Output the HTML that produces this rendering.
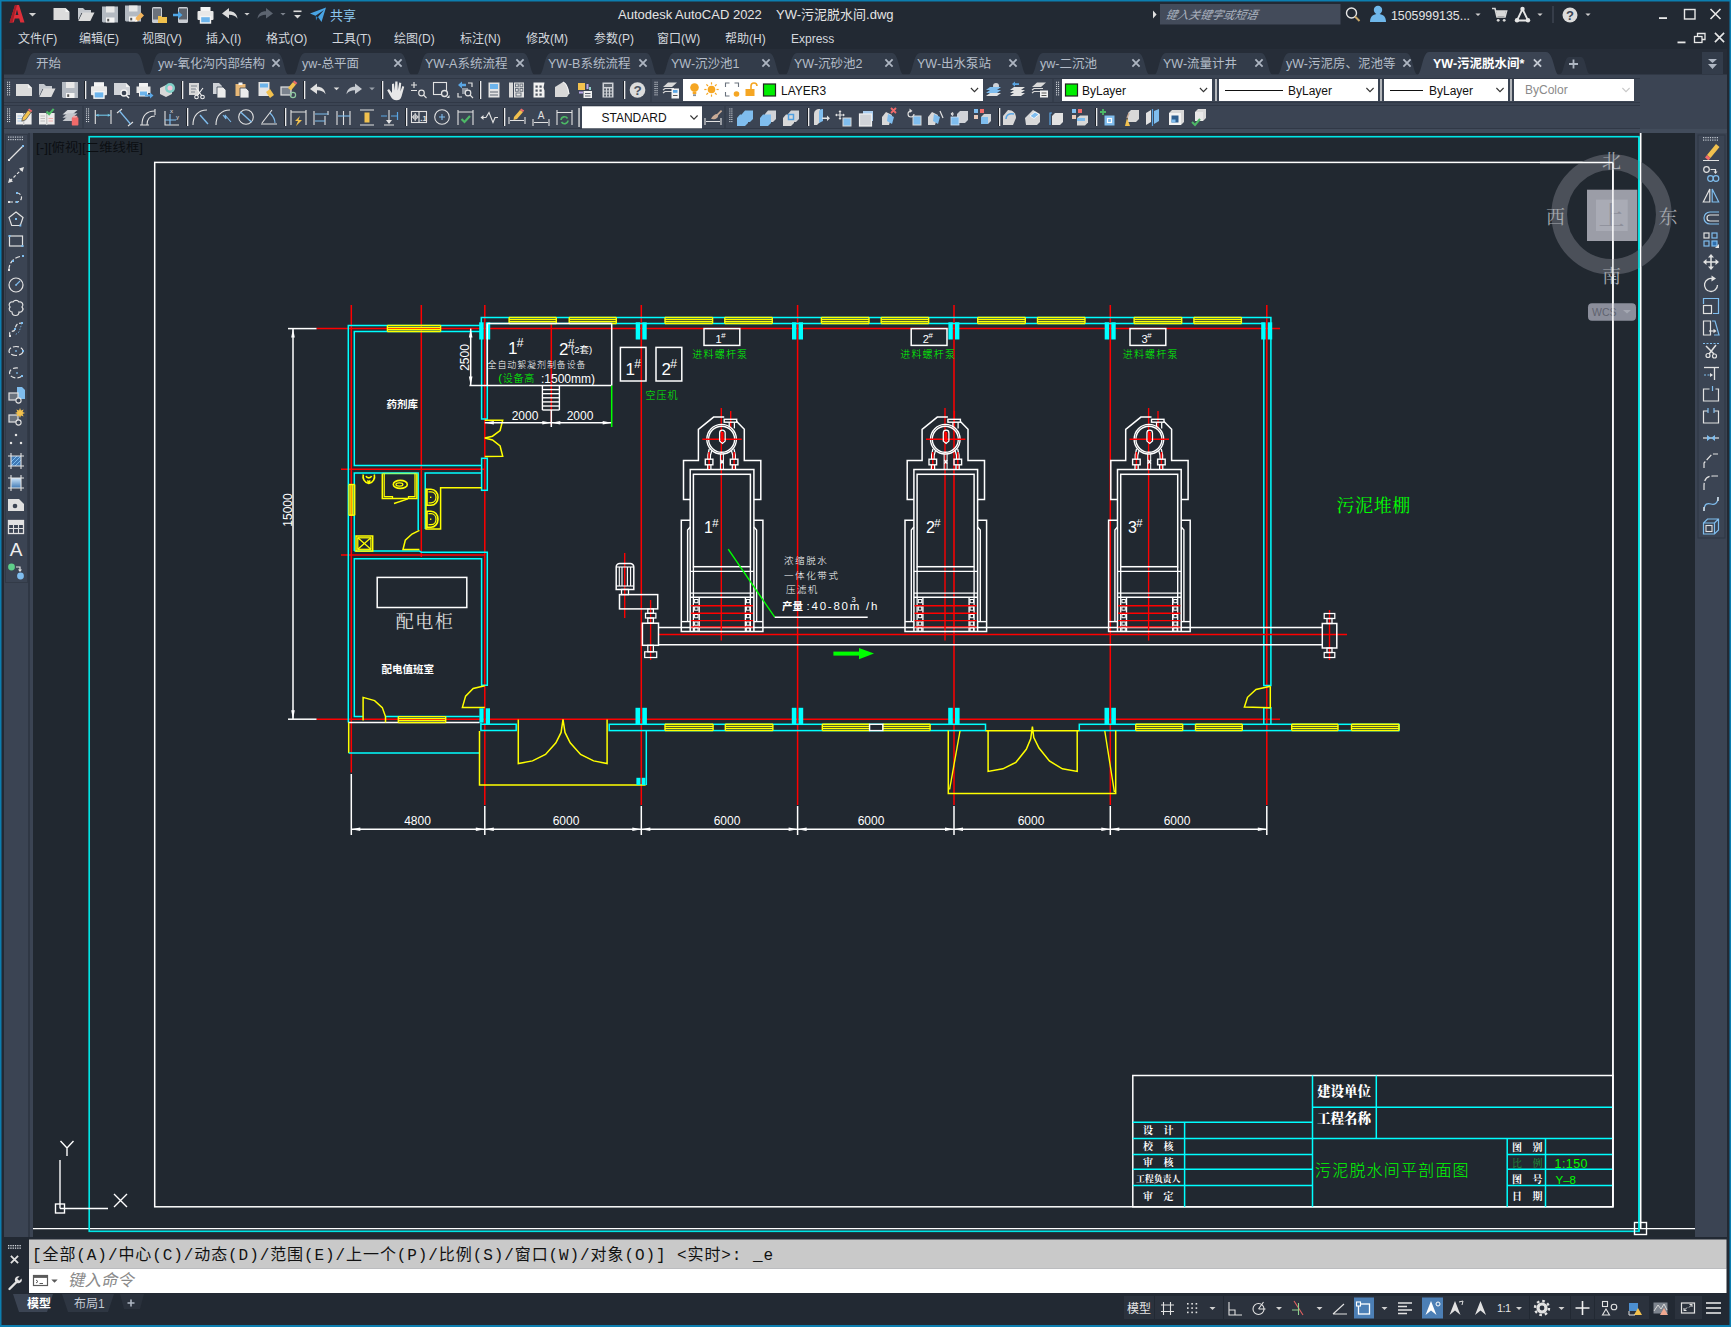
<!DOCTYPE html>
<html lang="zh"><head><meta charset="utf-8"><title>Autodesk AutoCAD 2022 - YW-污泥脱水间.dwg</title>
<style>
html,body{margin:0;padding:0;background:#222933;overflow:hidden}
svg{display:block;font-family:"Liberation Sans","Noto Sans CJK SC",sans-serif}
text{white-space:pre}
</style></head><body>
<svg width="1731" height="1327" viewBox="0 0 1731 1327">
<g id="chrome">
<rect x="0" y="0" width="1731" height="1327" fill="#0c7eb0"/>
<rect x="1.5" y="1.5" width="1728" height="1323.5" fill="#222933"/>
<rect x="4" y="49" width="1723" height="26" fill="#262d38"/>
<rect x="4" y="74.5" width="1723" height="58.5" fill="#3b4453"/>
<line x1="4" y1="102.5" x2="1640" y2="102.5" stroke="#303846" stroke-width="1" />
<line x1="4" y1="105.5" x2="1640" y2="105.5" stroke="#303846" stroke-width="1" />
<line x1="4" y1="128.5" x2="1640" y2="128.5" stroke="#303846" stroke-width="1" />
<line x1="4" y1="78.5" x2="1640" y2="78.5" stroke="#303846" stroke-width="1" />
<rect x="4" y="129" width="1723" height="4" fill="#424c5b"/>
<rect x="4" y="133" width="29" height="1104" fill="#3b4453"/>
<rect x="28" y="133" width="2" height="1104" fill="#2f3744"/>
<rect x="1695" y="133" width="32" height="1104" fill="#3b4453"/>
<rect x="33" y="133" width="1662" height="1104" fill="#212830"/>
<rect x="1698" y="135" width="27" height="403" fill="#3b4453" stroke="#2f3744" stroke-width="1"/>
<rect x="4" y="1237" width="1723" height="88" fill="#222933"/>
<rect x="29" y="1239.5" width="1697.5" height="29" fill="#c9c9c9"/>
<rect x="29" y="1268.5" width="1697.5" height="24.5" fill="#ffffff"/>
</g>
<g id="titlebar">
<path d="M9.5,22.5 L15,5 h4 L24.5,22.5 h-4.2 l-1.1,-4 h-4.4 l-1.1,4z M15.6,15 h2.8 l-1.4,-5.4z" fill="#dd2f3a" fill-rule="evenodd"/>
<path d="M9.5,22.5 L15,5 h2 L12.5,22.5z" fill="#a81d27"/>
<path d="M28.9,13.0 h7.2 l-3.6,3.6z" fill="#d0d0d0"/>
<path d="M53.5,8 h12 l4,4 v8 h-16z" fill="#dcdcdc"/>
<path d="M65.5,8 v4 h4z" fill="#f4f4f4"/>
<path d="M78,20.5 v-12.5 h5 l2,2 h6 v3 h-9.5 z" fill="#c4c8ce"/>
<path d="M78.3,21.0 l4.2,-8.5 h12 l-4.2,8.5z" fill="#dcdcdc"/>
<path d="M102,6.5 h16 v16 h-15 l-1,-1z" fill="#b4bac2"/>
<rect x="106" y="6.5" width="8.5" height="6" fill="#e8e8e8"/>
<rect x="106" y="17.5" width="8.5" height="5" fill="#f4f4f4"/>
<rect x="107.2" y="18.8" width="2" height="2.6" fill="#555"/>
<path d="M125,5.5 h16 v16 h-15 l-1,-1z" fill="#b4bac2"/>
<rect x="129" y="5.5" width="8.5" height="6" fill="#e8e8e8"/>
<rect x="129" y="16.5" width="8.5" height="5" fill="#f4f4f4"/>
<rect x="130.2" y="17.8" width="2" height="2.6" fill="#555"/>
<path d="M135,21.5 l1,-4 l5,-5 l3,3 l-5,5z" fill="#f2b45c"/>
<path d="M135,21.5 l0.7,-2.6 l2,2z" fill="#fff"/>
<rect x="152" y="7" width="10" height="16" fill="#c8ccd2" rx="1.5"/>
<rect x="153" y="8.5" width="8" height="11" fill="#6b727c"/>
<path d="M158,23 v-7 h3 l1,1 h5 v6z" fill="#f0c04c"/>
<rect x="178" y="7" width="10" height="16" fill="#c8ccd2" rx="1.5"/>
<rect x="179" y="8.5" width="8" height="11" fill="#5c636d"/>
<path d="M173,13.8 h5 v-2.6 l4.5,3.8 l-4.5,3.8 v-2.6 h-5z" fill="#4fa6e6"/>
<rect x="200.5" y="7" width="10" height="5" fill="#f4f4f4"/>
<rect x="197.5" y="11" width="16" height="9" fill="#e8e8e8" rx="1"/>
<rect x="200.5" y="16.5" width="10" height="6.5" fill="#6cb4ec" stroke="#f4f4f4" stroke-width="1.4"/>
<path d="M222,13.5 l7,-5.5 v3.3 c5,0 8,2.5 8.5,7.5 c-2,-3 -4.5,-4 -8.5,-4 v3.7z" fill="#dcdcdc"/>
<path d="M244.4,13.0 h5.2 l-2.6,2.6z" fill="#d0d0d0"/>
<path d="M273,13.5 l-7,-5.5 v3.3 c-5,0 -8,2.5 -8.5,7.5 c2,-3 4.5,-4 8.5,-4 v3.7z" fill="#5c6470"/>
<path d="M280.4,13.0 h5.2 l-2.6,2.6z" fill="#7c838d"/>
<rect x="293.5" y="10.5" width="8" height="1.6" fill="#d8d8d8"/>
<path d="M294.1,15.0 h6.8 l-3.4,3.4z" fill="#d8d8d8"/>
<path d="M310,13.5 L326,7.5 L321.5,22 L318,17 L324,10 L315.5,15.8z" fill="#49a5e6"/>
<path d="M315.8,16.3 l1.8,0.9 l-1.6,3.2z" fill="#2f86c6"/>
<text x="330" y="19.5" font-size="13" fill="#8cc8f0">共享</text>
<text x="618" y="18.5" font-size="13" fill="#e4e4e4">Autodesk AutoCAD 2022    YW-污泥脱水间.dwg</text>
<path d="M1153,10.5 l3.6,4 l-3.6,4z" fill="#e0e0e0"/>
<rect x="1160" y="4" width="180.5" height="20.5" fill="#434b5a"/>
<text x="1165" y="19" font-size="11.5" fill="#a9b1be" font-style="italic" transform="translate(1165 19) skewX(-12) translate(-1165 -19)">键入关键字或短语</text>
<circle cx="1351.5" cy="13" r="5" fill="none" stroke="#e6e6e6" stroke-width="1.4" />
<line x1="1355" y1="16.5" x2="1359.5" y2="21" stroke="#c9a86a" stroke-width="2" />
<circle cx="1378" cy="10" r="4.2" fill="#6fb7ea" stroke="none" stroke-width="0" />
<path d="M1370,22 c0,-6 3.5,-8 8,-8 s8,2 8,8z" fill="#6fb7ea"/>
<text x="1391" y="19.5" font-size="13" fill="#e4e4e4" textLength="79" lengthAdjust="spacingAndGlyphs">1505999135...</text>
<path d="M1475.4,13.5 h5.2 l-2.6,2.6z" fill="#d0d0d0"/>
<path d="M1492,8.5 h3 l2,8.5 h8 l1.6,-6 h-10.6" fill="none" stroke="#d8d8d8" stroke-width="1.6"/>
<rect x="1496.5" y="11" width="9" height="5" fill="#d8d8d8"/>
<circle cx="1498.2" cy="20.3" r="1.4" fill="#d8d8d8" stroke="none" stroke-width="0" />
<circle cx="1504.2" cy="20.3" r="1.4" fill="#d8d8d8" stroke="none" stroke-width="0" />
<path d="M1522.5,9 L1517,20.5 h11z" fill="none" stroke="#e6e6e6" stroke-width="1.8" stroke-linejoin="round"/>
<circle cx="1522.5" cy="9" r="2.2" fill="#e6e6e6" stroke="none" stroke-width="0" />
<circle cx="1517" cy="20.3" r="2.2" fill="#e6e6e6" stroke="none" stroke-width="0" />
<circle cx="1528" cy="20.3" r="2.2" fill="#e6e6e6" stroke="none" stroke-width="0" />
<path d="M1537.4,13.5 h5.2 l-2.6,2.6z" fill="#d0d0d0"/>
<rect x="1552.5" y="6" width="1" height="17" fill="#4a5261"/>
<circle cx="1570" cy="15" r="7.5" fill="#dcdcdc" stroke="none" stroke-width="0" />
<text x="1570" y="19.6" font-size="13" fill="#3b4453" text-anchor="middle" font-weight="bold">?</text>
<path d="M1585.4,13.5 h5.2 l-2.6,2.6z" fill="#d0d0d0"/>
<rect x="1659" y="17.2" width="8" height="1.8" fill="#e8e8e8"/>
<rect x="1684.5" y="9.5" width="10.5" height="9.5" fill="none" stroke="#e8e8e8" stroke-width="1.4"/>
<path d="M1710.5,9 L1720.5,19 M1720.5,9 L1710.5,19" stroke="#e8e8e8" stroke-width="1.6" fill="none"/>
<rect x="1677.5" y="41.5" width="8" height="1.8" fill="#e8e8e8"/>
<rect x="1694.5" y="36.5" width="7.5" height="6" fill="none" stroke="#e8e8e8" stroke-width="1.3"/>
<path d="M1697.5,36.5 v-3 h7.5 v6 h-3" fill="none" stroke="#e8e8e8" stroke-width="1.3"/>
<path d="M1714.9,32.9 L1724.1,42.1 M1724.1,32.9 L1714.9,42.1" stroke="#e8e8e8" stroke-width="1.6" fill="none"/>
<text x="18" y="42.8" font-size="12" fill="#d4d8de">文件(F)</text>
<text x="79" y="42.8" font-size="12" fill="#d4d8de">编辑(E)</text>
<text x="142" y="42.8" font-size="12" fill="#d4d8de">视图(V)</text>
<text x="206" y="42.8" font-size="12" fill="#d4d8de">插入(I)</text>
<text x="266" y="42.8" font-size="12" fill="#d4d8de">格式(O)</text>
<text x="332" y="42.8" font-size="12" fill="#d4d8de">工具(T)</text>
<text x="394" y="42.8" font-size="12" fill="#d4d8de">绘图(D)</text>
<text x="460" y="42.8" font-size="12" fill="#d4d8de">标注(N)</text>
<text x="526" y="42.8" font-size="12" fill="#d4d8de">修改(M)</text>
<text x="594" y="42.8" font-size="12" fill="#d4d8de">参数(P)</text>
<text x="657" y="42.8" font-size="12" fill="#d4d8de">窗口(W)</text>
<text x="725" y="42.8" font-size="12" fill="#d4d8de">帮助(H)</text>
<text x="791" y="42.8" font-size="12" fill="#d4d8de">Express</text>
<path d="M22,75 c5,0 5,-22 12,-22 H136 c7,0 7,22 12,22z" fill="#333c4a"/>
<text x="36" y="68" font-size="12.5" fill="#b4bcc8">开始</text>
<path d="M148,75 c5,0 5,-22 12,-22 H277 c7,0 7,22 12,22z" fill="#333c4a"/>
<text x="158" y="68" font-size="12.5" fill="#b4bcc8">yw-氧化沟内部结构</text>
<path d="M272.4,59.4 L279.6,66.6 M279.6,59.4 L272.4,66.6" stroke="#aeb6c2" stroke-width="1.8" fill="none"/>
<path d="M293,75 c5,0 5,-22 12,-22 H400 c7,0 7,22 12,22z" fill="#333c4a"/>
<text x="302" y="68" font-size="12.5" fill="#b4bcc8">yw-总平面</text>
<path d="M394.4,59.4 L401.6,66.6 M401.6,59.4 L394.4,66.6" stroke="#aeb6c2" stroke-width="1.8" fill="none"/>
<path d="M416,75 c5,0 5,-22 12,-22 H523 c7,0 7,22 12,22z" fill="#333c4a"/>
<text x="425" y="68" font-size="12.5" fill="#b4bcc8">YW-A系统流程</text>
<path d="M516.4,59.4 L523.6,66.6 M523.6,59.4 L516.4,66.6" stroke="#aeb6c2" stroke-width="1.8" fill="none"/>
<path d="M539,75 c5,0 5,-22 12,-22 H646 c7,0 7,22 12,22z" fill="#333c4a"/>
<text x="548" y="68" font-size="12.5" fill="#b4bcc8">YW-B系统流程</text>
<path d="M639.4,59.4 L646.6,66.6 M646.6,59.4 L639.4,66.6" stroke="#aeb6c2" stroke-width="1.8" fill="none"/>
<path d="M662,75 c5,0 5,-22 12,-22 H769 c7,0 7,22 12,22z" fill="#333c4a"/>
<text x="671" y="68" font-size="12.5" fill="#b4bcc8">YW-沉沙池1</text>
<path d="M762.4,59.4 L769.6,66.6 M769.6,59.4 L762.4,66.6" stroke="#aeb6c2" stroke-width="1.8" fill="none"/>
<path d="M785,75 c5,0 5,-22 12,-22 H892 c7,0 7,22 12,22z" fill="#333c4a"/>
<text x="794" y="68" font-size="12.5" fill="#b4bcc8">YW-沉砂池2</text>
<path d="M885.4,59.4 L892.6,66.6 M892.6,59.4 L885.4,66.6" stroke="#aeb6c2" stroke-width="1.8" fill="none"/>
<path d="M908,75 c5,0 5,-22 12,-22 H1015 c7,0 7,22 12,22z" fill="#333c4a"/>
<text x="917" y="68" font-size="12.5" fill="#b4bcc8">YW-出水泵站</text>
<path d="M1009.4,59.4 L1016.6,66.6 M1016.6,59.4 L1009.4,66.6" stroke="#aeb6c2" stroke-width="1.8" fill="none"/>
<path d="M1031,75 c5,0 5,-22 12,-22 H1138 c7,0 7,22 12,22z" fill="#333c4a"/>
<text x="1040" y="68" font-size="12.5" fill="#b4bcc8">yw-二沉池</text>
<path d="M1132.4,59.4 L1139.6,66.6 M1139.6,59.4 L1132.4,66.6" stroke="#aeb6c2" stroke-width="1.8" fill="none"/>
<path d="M1154,75 c5,0 5,-22 12,-22 H1261 c7,0 7,22 12,22z" fill="#333c4a"/>
<text x="1163" y="68" font-size="12.5" fill="#b4bcc8">YW-流量计井</text>
<path d="M1255.4,59.4 L1262.6,66.6 M1262.6,59.4 L1255.4,66.6" stroke="#aeb6c2" stroke-width="1.8" fill="none"/>
<path d="M1277,75 c5,0 5,-22 12,-22 H1406 c7,0 7,22 12,22z" fill="#333c4a"/>
<text x="1286" y="68" font-size="12.5" fill="#b4bcc8">yW-污泥房、泥池等</text>
<path d="M1403.4,59.4 L1410.6,66.6 M1410.6,59.4 L1403.4,66.6" stroke="#aeb6c2" stroke-width="1.8" fill="none"/>
<path d="M1416,76 c6,0 6,-24 13,-24 H1546 c8,0 8,24 14,24z" fill="#3b4453"/>
<text x="1433" y="68" font-size="12.5" fill="#ffffff" font-weight="bold">YW-污泥脱水间*</text>
<path d="M1533.9,59.4 L1541.1,66.6 M1541.1,59.4 L1533.9,66.6" stroke="#c4cad4" stroke-width="1.8" fill="none"/>
<path d="M1560,74 c4,0 4,-17 9,-17 h12 c5,0 5,17 9,17z" fill="#2f3744"/>
<path d="M1569,64 h9 M1573.5,59.5 v9" stroke="#aeb6c2" stroke-width="1.8"/>
<rect x="1702" y="52" width="21" height="22" fill="#333c4a"/>
<path d="M1708,59 h9 l-4.5,4z M1708,64 h9 l-4.5,5z" fill="#aeb6c2"/>
</g>
<g id="toolbars">
<rect x="7" y="81.7" width="1.1" height="1.1" fill="#d0d4da"/>
<rect x="9" y="81.7" width="1.1" height="1.1" fill="#d0d4da"/>
<rect x="7" y="83.8" width="1.1" height="1.1" fill="#d0d4da"/>
<rect x="9" y="83.8" width="1.1" height="1.1" fill="#d0d4da"/>
<rect x="7" y="85.9" width="1.1" height="1.1" fill="#d0d4da"/>
<rect x="9" y="85.9" width="1.1" height="1.1" fill="#d0d4da"/>
<rect x="7" y="88.0" width="1.1" height="1.1" fill="#d0d4da"/>
<rect x="9" y="88.0" width="1.1" height="1.1" fill="#d0d4da"/>
<rect x="7" y="90.1" width="1.1" height="1.1" fill="#d0d4da"/>
<rect x="9" y="90.1" width="1.1" height="1.1" fill="#d0d4da"/>
<rect x="7" y="92.2" width="1.1" height="1.1" fill="#d0d4da"/>
<rect x="9" y="92.2" width="1.1" height="1.1" fill="#d0d4da"/>
<rect x="7" y="94.3" width="1.1" height="1.1" fill="#d0d4da"/>
<rect x="9" y="94.3" width="1.1" height="1.1" fill="#d0d4da"/>
<path d="M16,84 h12 l4,4 v8 h-16z" fill="#dcdcdc"/>
<path d="M28,84 v4 h4z" fill="#f4f4f4"/>
<path d="M39,96.5 v-12.5 h5 l2,2 h6 v3 h-9.5 z" fill="#c4c8ce"/>
<path d="M39.3,97.0 l4.2,-8.5 h12 l-4.2,8.5z" fill="#dcdcdc"/>
<path d="M62,82 h16 v16 h-15 l-1,-1z" fill="#b4bac2"/>
<rect x="66" y="82" width="8.5" height="6" fill="#e8e8e8"/>
<rect x="66" y="93" width="8.5" height="5" fill="#f4f4f4"/>
<rect x="67.2" y="94.3" width="2" height="2.6" fill="#555"/>
<rect x="84" y="81" width="1" height="18" fill="#1d222a"/>
<rect x="85" y="81" width="1.3" height="18" fill="#ececec"/>
<rect x="94" y="82.2" width="10" height="5" fill="#f4f4f4"/>
<rect x="91" y="86.2" width="16" height="9" fill="#e8e8e8" rx="1"/>
<rect x="94" y="91.7" width="10" height="6.5" fill="#6cb4ec" stroke="#f4f4f4" stroke-width="1.4"/>
<path d="M114,83 h12 l4,4 v8 h-16z" fill="#d0d3d8"/>
<path d="M126,83 v4 h4z" fill="#f4f4f4"/>
<circle cx="124" cy="93" r="3" fill="#3b4453" stroke="#f2f2f2" stroke-width="1.3" />
<line x1="126.2" y1="95.2" x2="129" y2="98" stroke="#f2f2f2" stroke-width="1.5" />
<rect x="139" y="83" width="9" height="4" fill="#f2f2f2"/>
<rect x="136.5" y="86.5" width="14" height="6.5" fill="#e6e6e6"/>
<rect x="139.5" y="91" width="8" height="5" fill="#6cb4ec" stroke="#f2f2f2" stroke-width="1"/>
<path d="M145,94.5 h5 v-2 l3.5,3 l-3.5,3 v-2 h-5z" fill="#5aa6e4"/>
<path d="M160,88 l6,-3 l6,3 v6 l-6,3 l-6,-3z" fill="#d8d8d8"/>
<circle cx="170" cy="88" r="5" fill="#7fd0c8" stroke="none" stroke-width="0" />
<circle cx="170" cy="88" r="2.5" fill="#f2c6d8" stroke="none" stroke-width="0" />
<rect x="181" y="81" width="1" height="18" fill="#1d222a"/>
<rect x="182" y="81" width="1.3" height="18" fill="#ececec"/>
<rect x="189" y="83" width="10" height="12" fill="#d8d8d8"/>
<path d="M191,86 h6 M191,89 h6 M191,92 h4" stroke="#7a828c" stroke-width="1"/>
<path d="M196,88 l6,8 M203,88 l-6,8" stroke="#f4f4f4" stroke-width="1.1"/>
<circle cx="196.5" cy="97" r="1.8" fill="none" stroke="#f4f4f4" stroke-width="1.1" />
<circle cx="202.5" cy="97" r="1.8" fill="none" stroke="#f4f4f4" stroke-width="1.1" />
<path d="M213,83 h6 l3,3 v8 h-9z" fill="#cfd2d7"/>
<path d="M217,87 h6 l3,3 v8 h-9z" fill="#ececec" stroke="#3b4453" stroke-width="0.8"/>
<rect x="235.5" y="84" width="10" height="12" fill="#e8b877"/>
<rect x="238.5" y="82.5" width="4" height="2.5" fill="#f4f4f4"/>
<path d="M240,88 h6 l3,3 v7 h-9z" fill="#ececec" stroke="#3b4453" stroke-width="0.8"/>
<rect x="258.5" y="82" width="11" height="14" fill="#e4e4e4"/>
<rect x="260" y="83.5" width="8" height="4" fill="#6cb4ec"/>
<path d="M266,92 l4,-3 l4,6 l-4,3z" fill="#f2c14e"/>
<rect x="281" y="87" width="10" height="8" fill="#7b838e" stroke="#e4e4e4" stroke-width="1.2"/>
<path d="M288,88 l5,-6 l3,2.5 l-5,6z" fill="#f2c14e"/>
<path d="M293,82 l3,2.5 l1.3,-1.6 l-3,-2.5z" fill="#f06a6a"/>
<circle cx="293" cy="95" r="2.6" fill="none" stroke="#8fc9a0" stroke-width="1.2" />
<rect x="303" y="81" width="1" height="18" fill="#1d222a"/>
<rect x="304" y="81" width="1.3" height="18" fill="#ececec"/>
<path d="M310,89 l7,-5.5 v3.3 c5,0 8,2.5 8.5,7.5 c-2,-3 -4.5,-4 -8.5,-4 v3.7z" fill="#e0e0e0"/>
<path d="M333.7,87.5 h5.6 l-2.8,2.8z" fill="#e0e0e0"/>
<path d="M362,89 l-7,-5.5 v3.3 c-5,0 -8,2.5 -8.5,7.5 c2,-3 4.5,-4 8.5,-4 v3.7z" fill="#c6cad0"/>
<path d="M369.2,87.5 h5.6 l-2.8,2.8z" fill="#9aa1ab"/>
<rect x="381" y="81" width="1" height="18" fill="#1d222a"/>
<rect x="382" y="81" width="1.3" height="18" fill="#ececec"/>
<path d="M389,89 l3,4 v-9 l2,-0.5 l0.8,7 l0.5,-9 l2.2,0 l0.3,9 l1.4,-8 l2,0.6 l-0.8,8.4 l2,-5.5 l1.8,0.8 l-2.6,9.5 c-1,3 -2.4,4 -5,4 c-3,0 -4.6,-1.4 -6,-4 l-3.4,-6z" fill="#e8e8e8"/>
<path d="M411,85 h6 M414,82 v6 M411,90.5 h6" stroke="#e2e2e2" stroke-width="1.2"/>
<circle cx="421.5" cy="93" r="2.8" fill="none" stroke="#e2e2e2" stroke-width="1.2" />
<line x1="423.5" y1="95" x2="426.5" y2="98" stroke="#e2e2e2" stroke-width="1.1" />
<rect x="433.5" y="82.5" width="13" height="12" fill="none" stroke="#e2e2e2" stroke-width="1.1"/>
<circle cx="444.5" cy="93.5" r="3" fill="#3b4453" stroke="#e2e2e2" stroke-width="1.3" />
<path d="M446.5,98 h3 v-3z" fill="#e2e2e2"/>
<path d="M458,85 l4,-3.5 v2.3 h4 v2.4 h-4 v2.3z" fill="#5aa6e4"/>
<path d="M458,93 v4 h4 M468,83 h4 v4 M458,89 v-0" stroke="#e2e2e2" stroke-width="1.2" fill="none"/>
<rect x="462" y="88" width="6" height="6" fill="#8d949e"/>
<circle cx="468" cy="93" r="2.8" fill="#3b4453" stroke="#e2e2e2" stroke-width="1.2" />
<line x1="470" y1="95" x2="473" y2="98" stroke="#e2e2e2" stroke-width="1.1" />
<rect x="479" y="81" width="1" height="18" fill="#1d222a"/>
<rect x="480" y="81" width="1.3" height="18" fill="#ececec"/>
<rect x="488.5" y="82.5" width="11" height="15" fill="#e4e4e4"/>
<rect x="490" y="84" width="8" height="5" fill="#6cb4ec"/>
<path d="M490,92 h8 M490,95 h8" stroke="#5d6570" stroke-width="1.2"/>
<rect x="509" y="82.5" width="4" height="15" fill="#d8d8d8"/>
<rect x="514" y="82.5" width="10" height="15" fill="#e4e4e4"/>
<rect x="515.5" y="84" width="2.8" height="2.8" fill="none" stroke="#6a727d" stroke-width="1"/>
<rect x="515.5" y="88.5" width="2.8" height="2.8" fill="none" stroke="#6a727d" stroke-width="1"/>
<rect x="520.0" y="84" width="2.8" height="2.8" fill="none" stroke="#6a727d" stroke-width="1"/>
<rect x="520.0" y="88.5" width="2.8" height="2.8" fill="none" stroke="#6a727d" stroke-width="1"/>
<rect x="516" y="93" width="5" height="3" fill="none" stroke="#6a727d" stroke-width="1"/>
<path d="M533.5,82.5 h11 l-1,5 l1,3 v7 h-11z" fill="#f2f2f2"/>
<rect x="535.5" y="85.5" width="2.2" height="2.2" fill="#4d5560"/>
<rect x="535.5" y="89.5" width="2.2" height="2.2" fill="#4d5560"/>
<rect x="535.5" y="93.5" width="2.2" height="2.2" fill="#4d5560"/>
<rect x="539.5" y="85.5" width="2.2" height="2.2" fill="#4d5560"/>
<rect x="539.5" y="89.5" width="2.2" height="2.2" fill="#4d5560"/>
<rect x="539.5" y="93.5" width="2.2" height="2.2" fill="#4d5560"/>
<path d="M555,87 l8,-5 c3,1 5,5 6,12 l-2,3 h-12z" fill="#d8d8d8"/>
<path d="M563,82 c3,1 5,5 6,12" stroke="#f4f4f4" stroke-width="1.2" fill="none"/>
<rect x="578" y="83" width="7" height="7" fill="#f2c14e"/>
<rect x="586.5" y="84" width="2" height="5" fill="#b9a6e8"/>
<rect x="589" y="87" width="2" height="3" fill="#8fd0c8"/>
<rect x="579" y="91.5" width="4" height="2" fill="#b9a6e8"/>
<rect x="583.5" y="91" width="8.5" height="7" fill="#f2f2f2"/>
<path d="M585,93.5 h5.5 M585,96 h5.5" stroke="#59616c" stroke-width="1"/>
<rect x="602.5" y="82.5" width="11" height="15" fill="#cfd2d7"/>
<rect x="604" y="84" width="8" height="3" fill="#59616c"/>
<rect x="604" y="88.5" width="2" height="2" fill="#59616c"/>
<rect x="604" y="91.5" width="2" height="2" fill="#59616c"/>
<rect x="604" y="94.5" width="2" height="2" fill="#59616c"/>
<rect x="607" y="88.5" width="2" height="2" fill="#59616c"/>
<rect x="607" y="91.5" width="2" height="2" fill="#59616c"/>
<rect x="607" y="94.5" width="2" height="2" fill="#59616c"/>
<rect x="610" y="88.5" width="2" height="2" fill="#59616c"/>
<rect x="610" y="91.5" width="2" height="2" fill="#59616c"/>
<rect x="610" y="94.5" width="2" height="2" fill="#59616c"/>
<rect x="623" y="81" width="1" height="18" fill="#1d222a"/>
<rect x="624" y="81" width="1.3" height="18" fill="#ececec"/>
<circle cx="637.5" cy="90" r="7.8" fill="#dcdcdc" stroke="none" stroke-width="0" />
<text x="637.5" y="94.8" font-size="13.5" fill="#4a5260" text-anchor="middle" font-weight="bold">?</text>
<rect x="650.5" y="79" width="1" height="23" fill="#2f3744"/>
<rect x="654.5" y="81.7" width="1.1" height="1.1" fill="#d0d4da"/>
<rect x="656.5" y="81.7" width="1.1" height="1.1" fill="#d0d4da"/>
<rect x="654.5" y="83.8" width="1.1" height="1.1" fill="#d0d4da"/>
<rect x="656.5" y="83.8" width="1.1" height="1.1" fill="#d0d4da"/>
<rect x="654.5" y="85.9" width="1.1" height="1.1" fill="#d0d4da"/>
<rect x="656.5" y="85.9" width="1.1" height="1.1" fill="#d0d4da"/>
<rect x="654.5" y="88.0" width="1.1" height="1.1" fill="#d0d4da"/>
<rect x="656.5" y="88.0" width="1.1" height="1.1" fill="#d0d4da"/>
<rect x="654.5" y="90.1" width="1.1" height="1.1" fill="#d0d4da"/>
<rect x="656.5" y="90.1" width="1.1" height="1.1" fill="#d0d4da"/>
<rect x="654.5" y="92.2" width="1.1" height="1.1" fill="#d0d4da"/>
<rect x="656.5" y="92.2" width="1.1" height="1.1" fill="#d0d4da"/>
<rect x="654.5" y="94.3" width="1.1" height="1.1" fill="#d0d4da"/>
<rect x="656.5" y="94.3" width="1.1" height="1.1" fill="#d0d4da"/>
<path d="M663,87 l5,-4.5 h9 l-5,4.5z" fill="#d8d8d8"/>
<path d="M663,90 l2,-1.5 h9" stroke="#d8d8d8" stroke-width="1.2" fill="none"/>
<path d="M663,93 l2,-1.5 h7" stroke="#d8d8d8" stroke-width="1.2" fill="none"/>
<rect x="671.5" y="88.5" width="7.5" height="10" fill="#f2f2f2"/>
<rect x="673" y="90" width="4.5" height="2.8" fill="#5aa6e4"/>
<path d="M673,95.5 h4.5" stroke="#555" stroke-width="1"/>
<rect x="683" y="79" width="300" height="22" fill="#ffffff"/>
<circle cx="694.5" cy="87.5" r="4.3" fill="#f5a623" stroke="none" stroke-width="0" />
<rect x="692.7" y="91.5" width="3.6" height="2.5" fill="#f5a623"/>
<rect x="693" y="94.3" width="3" height="1.8" fill="#8a8f98"/>
<circle cx="711.5" cy="89.5" r="3.8" fill="#f5a623" stroke="none" stroke-width="0" />
<line x1="716.5" y1="89.5" x2="718.7" y2="89.5" stroke="#f5a623" stroke-width="1.2" />
<line x1="715.0" y1="93.0" x2="716.6" y2="94.6" stroke="#f5a623" stroke-width="1.2" />
<line x1="711.5" y1="94.5" x2="711.5" y2="96.7" stroke="#f5a623" stroke-width="1.2" />
<line x1="708.0" y1="93.0" x2="706.4" y2="94.6" stroke="#f5a623" stroke-width="1.2" />
<line x1="706.5" y1="89.5" x2="704.3" y2="89.5" stroke="#f5a623" stroke-width="1.2" />
<line x1="708.0" y1="86.0" x2="706.4" y2="84.4" stroke="#f5a623" stroke-width="1.2" />
<line x1="711.5" y1="84.5" x2="711.5" y2="82.3" stroke="#f5a623" stroke-width="1.2" />
<line x1="715.0" y1="86.0" x2="716.6" y2="84.4" stroke="#f5a623" stroke-width="1.2" />
<path d="M725.5,87 v-4 h4 M734.5,83 h4 v4 M725.5,92 v4 h4" stroke="#6a727d" stroke-width="1.1" fill="none"/>
<circle cx="736.5" cy="94" r="2.8" fill="#f5a623" stroke="none" stroke-width="0" />
<rect x="745.5" y="89" width="9" height="7" fill="#f5a623"/>
<path d="M751,89 v-3 a3,3 0 0 1 6,0" stroke="#f5a623" stroke-width="1.6" fill="none"/>
<rect x="763.5" y="84" width="12" height="12" fill="#00ee00" stroke="#222" stroke-width="1.2"/>
<text x="781" y="94.5" font-size="12" fill="#111">LAYER3</text>
<path d="M970.9,88 l3.6,3.6 l3.6,-3.6" stroke="#333" stroke-width="1.1" fill="none"/>
<circle cx="996" cy="86" r="3" fill="#cfd2d7" stroke="none" stroke-width="0" />
<path d="M986,90 l4,-3 h11 l-4,3z" fill="#7fbdee"/>
<path d="M986,93 l4,-3 h11 l-4,3z" fill="#7fbdee"/>
<path d="M986,96 l4,-3 h11 l-4,3z" fill="#e2e2e2"/>
<path d="M1012,84 l3,-2.5 v1.8 h4 v1.6 h-4 v1.8z" fill="#5aa6e4"/>
<path d="M1010,90 l4,-3 h11 l-4,3z" fill="#e2e2e2"/>
<path d="M1010,93 l4,-3 h11 l-4,3z" fill="#e2e2e2"/>
<path d="M1010,96 l4,-3 h11 l-4,3z" fill="#e2e2e2"/>
<path d="M1032,87 l5,-4.5 h9 l-5,4.5z" fill="#d8d8d8"/>
<path d="M1032,90 l2,-1.5 h9 M1032,93 l2,-1.5 h7" stroke="#d8d8d8" stroke-width="1.2" fill="none"/>
<rect x="1040" y="90.5" width="8" height="7" fill="#f2f2f2"/>
<path d="M1041.5,93 h5 M1041.5,95.5 h5" stroke="#555" stroke-width="1"/>
<rect x="1052.5" y="79" width="1" height="23" fill="#2f3744"/>
<rect x="1056" y="81.7" width="1.1" height="1.1" fill="#d0d4da"/>
<rect x="1058" y="81.7" width="1.1" height="1.1" fill="#d0d4da"/>
<rect x="1056" y="83.8" width="1.1" height="1.1" fill="#d0d4da"/>
<rect x="1058" y="83.8" width="1.1" height="1.1" fill="#d0d4da"/>
<rect x="1056" y="85.9" width="1.1" height="1.1" fill="#d0d4da"/>
<rect x="1058" y="85.9" width="1.1" height="1.1" fill="#d0d4da"/>
<rect x="1056" y="88.0" width="1.1" height="1.1" fill="#d0d4da"/>
<rect x="1058" y="88.0" width="1.1" height="1.1" fill="#d0d4da"/>
<rect x="1056" y="90.1" width="1.1" height="1.1" fill="#d0d4da"/>
<rect x="1058" y="90.1" width="1.1" height="1.1" fill="#d0d4da"/>
<rect x="1056" y="92.2" width="1.1" height="1.1" fill="#d0d4da"/>
<rect x="1058" y="92.2" width="1.1" height="1.1" fill="#d0d4da"/>
<rect x="1056" y="94.3" width="1.1" height="1.1" fill="#d0d4da"/>
<rect x="1058" y="94.3" width="1.1" height="1.1" fill="#d0d4da"/>
<rect x="1062" y="79" width="150" height="22" fill="#ffffff"/>
<rect x="1065.5" y="84" width="12" height="12" fill="#00ee00" stroke="#222" stroke-width="1.2"/>
<text x="1082" y="94.5" font-size="12" fill="#111">ByLayer</text>
<path d="M1199.9,88 l3.6,3.6 l3.6,-3.6" stroke="#333" stroke-width="1.1" fill="none"/>
<rect x="1215.3" y="79" width="1.4" height="22" fill="#e8e8e8"/>
<rect x="1219" y="79" width="159" height="22" fill="#ffffff"/>
<line x1="1225" y1="90.5" x2="1283" y2="90.5" stroke="#111" stroke-width="1" />
<text x="1288" y="94.5" font-size="12" fill="#111">ByLayer</text>
<path d="M1366.4,88 l3.6,3.6 l3.6,-3.6" stroke="#333" stroke-width="1.1" fill="none"/>
<rect x="1380.3" y="79" width="1.4" height="22" fill="#e8e8e8"/>
<rect x="1384" y="79" width="124" height="22" fill="#ffffff"/>
<line x1="1390" y1="90.5" x2="1423" y2="90.5" stroke="#111" stroke-width="1" />
<text x="1429" y="94.5" font-size="12" fill="#111">ByLayer</text>
<path d="M1496.4,88 l3.6,3.6 l3.6,-3.6" stroke="#333" stroke-width="1.1" fill="none"/>
<rect x="1510.3" y="79" width="1.4" height="22" fill="#e8e8e8"/>
<rect x="1514" y="79" width="120" height="22" fill="#ffffff"/>
<text x="1525" y="94" font-size="12" fill="#8a8a8a">ByColor</text>
<path d="M1622.4,88 l3.6,3.6 l3.6,-3.6" stroke="#c8c8c8" stroke-width="1.1" fill="none"/>
<rect x="7" y="108.4" width="1.1" height="1.1" fill="#d0d4da"/>
<rect x="9" y="108.4" width="1.1" height="1.1" fill="#d0d4da"/>
<rect x="7" y="110.5" width="1.1" height="1.1" fill="#d0d4da"/>
<rect x="9" y="110.5" width="1.1" height="1.1" fill="#d0d4da"/>
<rect x="7" y="112.6" width="1.1" height="1.1" fill="#d0d4da"/>
<rect x="9" y="112.6" width="1.1" height="1.1" fill="#d0d4da"/>
<rect x="7" y="114.7" width="1.1" height="1.1" fill="#d0d4da"/>
<rect x="9" y="114.7" width="1.1" height="1.1" fill="#d0d4da"/>
<rect x="7" y="116.8" width="1.1" height="1.1" fill="#d0d4da"/>
<rect x="9" y="116.8" width="1.1" height="1.1" fill="#d0d4da"/>
<rect x="7" y="118.9" width="1.1" height="1.1" fill="#d0d4da"/>
<rect x="9" y="118.9" width="1.1" height="1.1" fill="#d0d4da"/>
<rect x="7" y="121.0" width="1.1" height="1.1" fill="#d0d4da"/>
<rect x="9" y="121.0" width="1.1" height="1.1" fill="#d0d4da"/>
<path d="M16,113 h7 l0.8,1 l0.8,-1 h7 v11.5 h-7 l-0.8,0.8 l-0.8,-0.8 h-7z" fill="#ececec"/>
<line x1="23.8" y1="114" x2="23.8" y2="124.5" stroke="#b8b8b8" stroke-width="1" />
<path d="M17.5,116 h4.5 M17.5,118.5 h4.5 M17.5,121 h4.5" stroke="#9fc4e8" stroke-width="0.9"/>
<path d="M22.5,117.5 l5.5,-7.5 l3.2,2.3 l-5.5,7.5 l-3.9,1.4z" fill="#f2c14e" stroke="#3b4453" stroke-width="0.7"/>
<path d="M28,110 l3.2,2.3 l1.1,-1.6 l-3.2,-2.3z" fill="#f06a6a"/>
<path d="M39,113 h7 l0.8,1 l0.8,-1 h7 v11.5 h-7 l-0.8,0.8 l-0.8,-0.8 h-7z" fill="#ececec"/>
<line x1="46.8" y1="114" x2="46.8" y2="124.5" stroke="#b8b8b8" stroke-width="1" />
<path d="M40.5,116 h4.5 M40.5,118.5 h4.5 M40.5,121 h4.5" stroke="#b8b8b8" stroke-width="0.9"/>
<path d="M48.5,118.5 h4.5 M48.5,121 h4.5" stroke="#f0a8a8" stroke-width="0.9"/>
<path d="M46.5,111.5 l2.6,2.6 l4.6,-5.2" stroke="#4db866" stroke-width="2.1" fill="none"/>
<path d="M62.5,114.5 l5,-4.5 h10 l-5,4.5z" fill="#d4d7dc"/>
<path d="M62.5,117.7 l5,-4.5 h10 l-5,4.5z" fill="#c2c6cc"/>
<path d="M62.5,120.9 l5,-4.5 h10 l-5,4.5z" fill="#c2c6cc"/>
<rect x="71.8" y="117.2" width="6.6" height="8.3" fill="#f06a6a" rx="0.8"/>
<rect x="73" y="115.8" width="4.2" height="1.6" fill="#f4a0a0"/>
<rect x="82.5" y="106" width="1" height="23" fill="#2f3744"/>
<rect x="86" y="108.4" width="1.1" height="1.1" fill="#d0d4da"/>
<rect x="88" y="108.4" width="1.1" height="1.1" fill="#d0d4da"/>
<rect x="86" y="110.5" width="1.1" height="1.1" fill="#d0d4da"/>
<rect x="88" y="110.5" width="1.1" height="1.1" fill="#d0d4da"/>
<rect x="86" y="112.6" width="1.1" height="1.1" fill="#d0d4da"/>
<rect x="88" y="112.6" width="1.1" height="1.1" fill="#d0d4da"/>
<rect x="86" y="114.7" width="1.1" height="1.1" fill="#d0d4da"/>
<rect x="88" y="114.7" width="1.1" height="1.1" fill="#d0d4da"/>
<rect x="86" y="116.8" width="1.1" height="1.1" fill="#d0d4da"/>
<rect x="88" y="116.8" width="1.1" height="1.1" fill="#d0d4da"/>
<rect x="86" y="118.9" width="1.1" height="1.1" fill="#d0d4da"/>
<rect x="88" y="118.9" width="1.1" height="1.1" fill="#d0d4da"/>
<rect x="86" y="121.0" width="1.1" height="1.1" fill="#d0d4da"/>
<rect x="88" y="121.0" width="1.1" height="1.1" fill="#d0d4da"/>
<path d="M95.3,110 v14 M111,110 v14" stroke="#e2e2e2" stroke-width="1.1"/>
<path d="M96,115.2 h14.5" stroke="#72c4e4" stroke-width="1.1"/>
<path d="M96,115.2 l2.5,-1.5 v3z M110.3,115.2 l-2.5,-1.5 v3z" fill="#72c4e4"/>
<path d="M117,113 l5,-4 M128,126 l5,-4" stroke="#e2e2e2" stroke-width="1.1"/>
<path d="M119.5,111 l11,13" stroke="#7fbdee" stroke-width="1.2"/>
<path d="M142,125 c0,-9 4,-14 13,-14 M147,125 c0,-6 3,-9 8,-9" stroke="#e2e2e2" stroke-width="1.1" fill="none"/>
<path d="M140,125 h9 M155,109 v6" stroke="#e2e2e2" stroke-width="1.1"/>
<path d="M165,111 v14 h14" stroke="#e2e2e2" stroke-width="1.1" fill="none"/>
<path d="M170,114 v11 M165,120 h11" stroke="#7fbdee" stroke-width="1.2" fill="none"/>
<text x="170" y="113" font-size="6" fill="#e2e2e2">x</text>
<text x="176" y="119" font-size="6" fill="#e2e2e2">y</text>
<rect x="186" y="108" width="1" height="18" fill="#1d222a"/>
<rect x="187" y="108" width="1.3" height="18" fill="#ececec"/>
<path d="M193,125 c0,-9 5,-15 14,-15" stroke="#e2e2e2" stroke-width="1.1" fill="none"/>
<line x1="200" y1="115" x2="208" y2="124" stroke="#7fbdee" stroke-width="1.4" />
<path d="M216,125 c0,-9 5,-15 14,-15" stroke="#e2e2e2" stroke-width="1.1" fill="none"/>
<path d="M223,115 l3,4 l-1,-4 l6,7" stroke="#7fbdee" stroke-width="1.1" fill="none"/>
<circle cx="246" cy="117" r="7.3" fill="none" stroke="#e2e2e2" stroke-width="1.1" />
<line x1="240.5" y1="112" x2="251.5" y2="122" stroke="#7fbdee" stroke-width="1.4" />
<path d="M261,124 h16 M262,123 l10,-13" stroke="#e2e2e2" stroke-width="1.1" fill="none"/>
<path d="M270,113 c3,3 5,6 5,10" stroke="#7fbdee" stroke-width="1.1" fill="none"/>
<rect x="284" y="108" width="1" height="18" fill="#1d222a"/>
<rect x="285" y="108" width="1.3" height="18" fill="#ececec"/>
<path d="M291,110 v15 M306,110 v15 M291,112 h15" stroke="#e2e2e2" stroke-width="1.1" fill="none"/>
<path d="M300,116 l-5,5 h3 l-2,5 l6,-6 h-3.5z" fill="#f2c14e"/>
<path d="M314,111 v14 M325,116 v9 M328,111 v4" stroke="#e2e2e2" stroke-width="1.1" fill="none"/>
<path d="M315,114 h13 M315,121 h10" stroke="#7fbdee" stroke-width="1.1"/>
<path d="M337,111 v14 M343.5,111 v14 M350,111 v14" stroke="#e2e2e2" stroke-width="1.1" fill="none"/>
<path d="M338,116 h12" stroke="#7fbdee" stroke-width="1.1"/>
<path d="M360,110 h14 M360,125 h14" stroke="#e2e2e2" stroke-width="1.1"/>
<rect x="364.5" y="112.5" width="5" height="10" fill="#f2c14e"/>
<path d="M389,110 v13 M384,125 h10" stroke="#e2e2e2" stroke-width="1.1"/>
<path d="M381,116 h6 M391,116 h6 M397.5,112 v8" stroke="#5aa6e4" stroke-width="1.2"/>
<path d="M386,120 h6 l-3,4z" fill="#e2e2e2"/>
<rect x="405" y="108" width="1" height="18" fill="#1d222a"/>
<rect x="406" y="108" width="1.3" height="18" fill="#ececec"/>
<rect x="411.5" y="111.5" width="15" height="11" fill="none" stroke="#e2e2e2" stroke-width="1.1"/>
<line x1="419" y1="111.5" x2="419" y2="122.5" stroke="#e2e2e2" stroke-width="1.2" />
<circle cx="415.2" cy="117" r="2.2" fill="none" stroke="#e2e2e2" stroke-width="1" />
<path d="M415.2,113 v8 M411.8,117 h7" stroke="#e2e2e2" stroke-width="1"/>
<text x="420.3" y="120.5" font-size="8" fill="#e2e2e2" font-weight="bold">.1</text>
<circle cx="442" cy="117" r="7.3" fill="none" stroke="#e2e2e2" stroke-width="1.1" />
<path d="M439,117 h6 M442,114 v6" stroke="#7fbdee" stroke-width="1.1"/>
<path d="M458,110 v15 M473,110 v15 M458,112 h15" stroke="#e2e2e2" stroke-width="1.1" fill="none"/>
<path d="M461.5,119 l3,3 l5.5,-6" stroke="#4db866" stroke-width="2.2" fill="none"/>
<path d="M481,117.5 h5 l3,-5 l4,10 l2,-5 h3" stroke="#e2e2e2" stroke-width="1.1" fill="none"/>
<path d="M480.5,117.5 l3,-2.5 v5z" fill="#e2e2e2"/>
<rect x="503" y="108" width="1" height="18" fill="#1d222a"/>
<rect x="504" y="108" width="1.3" height="18" fill="#ececec"/>
<path d="M509,117 v7 M525,117 v7 M510,120.5 h14" stroke="#e2e2e2" stroke-width="1.1"/>
<path d="M514,117 l6,-7 l3,2 l-6,7 l-3.5,1z" fill="#f2c14e"/>
<path d="M520,110 l3,2 l1.2,-1.5 l-3,-2z" fill="#f06a6a"/>
<path d="M533,119 v7 M549,119 v7 M534,122.5 h14" stroke="#e2e2e2" stroke-width="1.1"/>
<text x="541" y="118.5" font-size="10" fill="#e2e2e2" text-anchor="middle">A</text>
<path d="M557,110 v15 M572,110 v15 M557,112.5 h15" stroke="#e2e2e2" stroke-width="1.1" fill="none"/>
<path d="M561,120 a3.5,3.5 0 0 1 6.5,-1.5 M568,120.5 a3.5,3.5 0 0 1 -6.5,1.5" stroke="#4db866" stroke-width="1.6" fill="none"/>
<rect x="578.4" y="108" width="1.3" height="19" fill="#e8e8e8"/>
<rect x="582" y="106.3" width="120" height="22" fill="#ffffff"/>
<text x="601.5" y="122.2" font-size="12" fill="#111">STANDARD</text>
<path d="M690.4,115.5 l3.6,3.6 l3.6,-3.6" stroke="#333" stroke-width="1.1" fill="none"/>
<path d="M705,118 v7 M721,118 v7 M706,121.5 h14" stroke="#e2e2e2" stroke-width="1.1"/>
<path d="M711,119 c1,-3 4,-5 6,-5 l4,-4 l1.2,1.2 l-4,4 c0,2.4 -2,4.6 -7.2,3.8z" fill="#c9ab96"/>
<rect x="724.5" y="106" width="1" height="23" fill="#2f3744"/>
<rect x="729.3" y="108.4" width="1.1" height="1.1" fill="#d0d4da"/>
<rect x="731.3" y="108.4" width="1.1" height="1.1" fill="#d0d4da"/>
<rect x="729.3" y="110.5" width="1.1" height="1.1" fill="#d0d4da"/>
<rect x="731.3" y="110.5" width="1.1" height="1.1" fill="#d0d4da"/>
<rect x="729.3" y="112.6" width="1.1" height="1.1" fill="#d0d4da"/>
<rect x="731.3" y="112.6" width="1.1" height="1.1" fill="#d0d4da"/>
<rect x="729.3" y="114.7" width="1.1" height="1.1" fill="#d0d4da"/>
<rect x="731.3" y="114.7" width="1.1" height="1.1" fill="#d0d4da"/>
<rect x="729.3" y="116.8" width="1.1" height="1.1" fill="#d0d4da"/>
<rect x="731.3" y="116.8" width="1.1" height="1.1" fill="#d0d4da"/>
<rect x="729.3" y="118.9" width="1.1" height="1.1" fill="#d0d4da"/>
<rect x="731.3" y="118.9" width="1.1" height="1.1" fill="#d0d4da"/>
<rect x="729.3" y="121.0" width="1.1" height="1.1" fill="#d0d4da"/>
<rect x="731.3" y="121.0" width="1.1" height="1.1" fill="#d0d4da"/>
<path d="M742,114 l3,-3.5 h8 v8.5 l-3,3 h-8z" fill="#7fbdee"/>
<path d="M737,118 l3,-3.5 h8 v8.5 l-3,3 h-8z" fill="#7fbdee"/>
<path d="M765,114 l3,-3.5 h8 v8.5 l-3,3 h-8z" fill="#d0d3d8"/>
<path d="M760,118 l3,-3.5 h8 v8.5 l-3,3 h-8z" fill="#7fbdee"/>
<path d="M788,114 l3,-3.5 h8 v8.5 l-3,3 h-8z" fill="#d0d3d8"/>
<path d="M783,118 l3,-3.5 h8 v8.5 l-3,3 h-8z" fill="#d8d8d8"/>
<rect x="788.5" y="114.5" width="5" height="5" fill="none" stroke="#4f9fe0" stroke-width="1.5"/>
<rect x="807" y="108" width="1" height="18" fill="#1d222a"/>
<rect x="808" y="108" width="1.3" height="18" fill="#ececec"/>
<path d="M814,125 v-11 c0,-3 2,-5 6,-5 v13 l-3,3z" fill="#d8d8d8"/>
<path d="M819,123 v-11 c0,-2 1,-3 4,-3 v12z" fill="#7fbdee"/>
<path d="M822,117.5 h5 v-2 l3,2.8 l-3,2.8 v-2 h-5z" fill="#e2e2e2"/>
<path d="M836,115 h8 M840,111 v8" stroke="#e2e2e2" stroke-width="1.2"/>
<path d="M835,115 l2,-1.5 v3z M845,115 l-2,-1.5 v3z M840,110 l-1.5,2 h3z M840,120 l-1.5,-2 h3z" fill="#e2e2e2"/>
<rect x="843" y="118" width="8" height="8" fill="#7fbdee" stroke="#d8d8d8" stroke-width="1"/>
<rect x="863" y="111" width="10" height="10" fill="#a9cdf0"/>
<rect x="859.5" y="114" width="12" height="12" fill="#d0d3d8" stroke="#f0f0f0" stroke-width="1.2"/>
<path d="M882,125 v-8 l4,-5 l6,3 l-3,10z" fill="#d8d8d8"/>
<path d="M888,114 l6,3 l-2,7 l-5,-3z" fill="#7fbdee"/>
<path d="M891,108 l5,5 M896,108 l-5,5" stroke="#f06a6a" stroke-width="1.8"/>
<path d="M911,111 a3,3 0 1 0 3,3" stroke="#e2e2e2" stroke-width="1.1" fill="none"/>
<path d="M909.5,108.5 l3,2.5 l-3,2z" fill="#e2e2e2"/>
<rect x="913" y="116" width="8" height="9" fill="#7fbdee" stroke="#d8d8d8" stroke-width="1"/>
<path d="M928,125 v-8 l4,-5 l6,3 l-3,10z" fill="#d8d8d8"/>
<path d="M934,114 l6,3 l-2,7 l-5,-3z" fill="#7fbdee"/>
<path d="M940,111 l3,7" stroke="#e2e2e2" stroke-width="1.2"/>
<path d="M957,114 l3,-3 h8 v9 l-3,3 h-8z" fill="#d0d3d8"/>
<rect x="951" y="117" width="8" height="8" fill="#7fbdee" stroke="#cfe3f5" stroke-width="0.8"/>
<path d="M951,114 h3 M951,114 l2,-1.6 M951,114 l2,1.6" stroke="#e2e2e2" stroke-width="1.1" fill="none"/>
<rect x="974" y="109" width="4" height="4" fill="#7fbdee"/>
<rect x="980" y="109" width="4" height="4" fill="#f06a6a"/>
<rect x="974" y="115" width="4" height="4" fill="#e8c9b8"/>
<path d="M981,117 l3,-3 h7 v7 l-3,3 h-7z" fill="#d0d3d8"/>
<rect x="981" y="117" width="7" height="7" fill="#7fbdee"/>
<rect x="998" y="108" width="1" height="18" fill="#1d222a"/>
<rect x="999" y="108" width="1.3" height="18" fill="#ececec"/>
<path d="M1003,125 v-9 l5,-6 c5,0 8,3 8,8 l-3,7z" fill="#d8d8d8"/>
<path d="M1006,119 c0,-4 3,-6 8,-5" stroke="#5aa6e4" stroke-width="1.6" fill="none"/>
<path d="M1026,125 l-1,-7 l8,-8 l7,4 v8 l-3,3z" fill="#d8d8d8"/>
<path d="M1030,116 l5,-4 l4,2.5 l-5,4z" fill="#7fbdee" stroke="#fff" stroke-width="0.8"/>
<path d="M1052,116 l3,-3 h8 v9 l-3,3 h-8z" fill="#e2e2e2"/>
<path d="M1050,125 v-12 h2" stroke="#5aa6e4" stroke-width="1.2" fill="none"/>
<rect x="1072" y="109" width="4" height="4" fill="#7fbdee"/>
<rect x="1078" y="109" width="4" height="4" fill="#f06a6a"/>
<rect x="1072" y="115" width="4" height="4" fill="#e8c9b8"/>
<path d="M1077,118 l3,-2.5 h8 v7 l-3,3 h-8z" fill="#d8d8d8"/>
<rect x="1077" y="118" width="8" height="3" fill="#7fbdee"/>
<rect x="1095" y="108" width="1" height="18" fill="#1d222a"/>
<rect x="1096" y="108" width="1.3" height="18" fill="#ececec"/>
<path d="M1100,112 h6 M1103,109 v6" stroke="#4db866" stroke-width="1.8"/>
<rect x="1104.5" y="115.5" width="10" height="10" fill="#7fbdee"/>
<rect x="1107.5" y="118.5" width="4" height="4" fill="none" stroke="#fff" stroke-width="1.2"/>
<path d="M1128,113 l3,-3 h8 v9 l-3,3 h-8z" fill="#d8d8d8"/>
<path d="M1125,126 l2,-8 l3,8z" fill="#f2c14e"/>
<line x1="1127" y1="118" x2="1129" y2="113" stroke="#c9ab96" stroke-width="1.4" />
<path d="M1146,113 l5,-3 v12 l-5,3z" fill="#e2e2e2"/>
<path d="M1154,111 l5,-2 v12 l-5,3z" fill="#7fbdee"/>
<line x1="1152.5" y1="109" x2="1152.5" y2="126" stroke="#5aa6e4" stroke-width="1.2" />
<path d="M1169,113 l3,-3 h12 v12 l-3,3 h-12z" fill="#d8d8d8"/>
<rect x="1169" y="113" width="12" height="12" fill="#f2f2f2"/>
<rect x="1171.5" y="115.5" width="7" height="7" fill="#2f5f8f"/>
<rect x="1171.5" y="119.5" width="4" height="3" fill="#7fbdee"/>
<path d="M1195,112 l3,-3 h8 v9 l-3,3 h-8z" fill="#d8d8d8"/>
<rect x="1195" y="112" width="8" height="9" fill="#e8e8e8"/>
<path d="M1192,122 l3,3 l5,-6" stroke="#4db866" stroke-width="2" fill="none"/>
</g>
<g id="sidebars">
<rect x="5.5" y="134.5" width="22" height="448" fill="#3b4453" stroke="#323a47" stroke-width="1"/>
<rect x="8.0" y="136.5" width="1.2" height="1.2" fill="#c4c9d0"/>
<rect x="8.0" y="139" width="1.2" height="1.2" fill="#c4c9d0"/>
<rect x="10.3" y="136.5" width="1.2" height="1.2" fill="#c4c9d0"/>
<rect x="10.3" y="139" width="1.2" height="1.2" fill="#c4c9d0"/>
<rect x="12.6" y="136.5" width="1.2" height="1.2" fill="#c4c9d0"/>
<rect x="12.6" y="139" width="1.2" height="1.2" fill="#c4c9d0"/>
<rect x="14.899999999999999" y="136.5" width="1.2" height="1.2" fill="#c4c9d0"/>
<rect x="14.899999999999999" y="139" width="1.2" height="1.2" fill="#c4c9d0"/>
<rect x="17.2" y="136.5" width="1.2" height="1.2" fill="#c4c9d0"/>
<rect x="17.2" y="139" width="1.2" height="1.2" fill="#c4c9d0"/>
<rect x="19.5" y="136.5" width="1.2" height="1.2" fill="#c4c9d0"/>
<rect x="19.5" y="139" width="1.2" height="1.2" fill="#c4c9d0"/>
<rect x="21.799999999999997" y="136.5" width="1.2" height="1.2" fill="#c4c9d0"/>
<rect x="21.799999999999997" y="139" width="1.2" height="1.2" fill="#c4c9d0"/>
<line x1="9" y1="160" x2="23" y2="146" stroke="#e2e2e2" stroke-width="1.2" />
<rect x="8.0" y="159.0" width="2" height="2" fill="#e2e2e2"/>
<rect x="22.0" y="145.0" width="2" height="2" fill="#7fbdee"/>
<line x1="10" y1="181" x2="22" y2="169" stroke="#e2e2e2" stroke-width="1.2" stroke-dasharray="3 2"/>
<path d="M24,167 l-5,1.5 l3.5,3.5z M8,183 l5,-1.5 l-3.5,-3.5z" fill="#e2e2e2"/>
<path d="M9,202 h8 a4.5,4.5 0 0 0 0,-9" stroke="#e2e2e2" stroke-width="1.2" fill="none" stroke-dasharray="4 2"/>
<rect x="8.0" y="201.0" width="2" height="2" fill="#e2e2e2"/>
<rect x="16.0" y="201.0" width="2" height="2" fill="#7fbdee"/>
<rect x="16.0" y="192.0" width="2" height="2" fill="#7fbdee"/>
<path d="M16,212 l7,5.5 l-2.7,8 h-8.6 l-2.7,-8z" stroke="#e2e2e2" stroke-width="1.2" fill="none"/>
<rect x="15.0" y="218.0" width="2" height="2" fill="#7fbdee"/>
<rect x="19.3" y="224.5" width="2" height="2" fill="#7fbdee"/>
<rect x="9.5" y="236" width="13" height="10" fill="none" stroke="#e2e2e2" stroke-width="1.2"/>
<rect x="8.5" y="235.0" width="2" height="2" fill="#7fbdee"/>
<rect x="21.5" y="245.0" width="2" height="2" fill="#7fbdee"/>
<path d="M9,270 c0,-8 5,-13 14,-14" stroke="#e2e2e2" stroke-width="1.2" fill="none" stroke-dasharray="5 2"/>
<rect x="8.0" y="269.0" width="2" height="2" fill="#e2e2e2"/>
<rect x="22.0" y="255.0" width="2" height="2" fill="#7fbdee"/>
<rect x="12.0" y="260.0" width="2" height="2" fill="#7fbdee"/>
<circle cx="16" cy="285" r="7" fill="none" stroke="#e2e2e2" stroke-width="1.2" />
<line x1="16" y1="285" x2="20" y2="281" stroke="#7fbdee" stroke-width="1.1" />
<rect x="15.2" y="284.2" width="1.6" height="1.6" fill="#7fbdee"/>
<path d="M12,312 a3,3 0 0 1 -2,-5 a3,3 0 0 1 3,-5 a3.5,3.5 0 0 1 6,0 a3,3 0 0 1 3,5 a3,3 0 0 1 -3,5 a3.5,3.5 0 0 1 -7,0z" stroke="#e2e2e2" stroke-width="1.2" fill="none"/>
<path d="M10,336 c-2,-8 4,-2 5,-7 s3,-6 7,-6" stroke="#e2e2e2" stroke-width="1.2" fill="none" stroke-dasharray="4 2"/>
<rect x="9.0" y="335.0" width="2" height="2" fill="#e2e2e2"/>
<rect x="21.0" y="322.0" width="2" height="2" fill="#7fbdee"/>
<rect x="14.0" y="328.0" width="2" height="2" fill="#7fbdee"/>
<path d="M22,323 l-3,9 l-4,3" stroke="#7fbdee" stroke-width="0.8" fill="none" stroke-dasharray="1.5 1.5"/>
<ellipse cx="16" cy="351" rx="7" ry="4.5" stroke="#e2e2e2" stroke-width="1.2" fill="none" stroke-dasharray="6 2"/>
<rect x="15.2" y="350.2" width="1.6" height="1.6" fill="#7fbdee"/>
<rect x="22.0" y="350.0" width="2" height="2" fill="#7fbdee"/>
<path d="M18,368 a7,5 0 1 0 4,8" stroke="#e2e2e2" stroke-width="1.2" fill="none" stroke-dasharray="5 2"/>
<rect x="16.2" y="372.2" width="1.6" height="1.6" fill="#7fbdee"/>
<rect x="21.0" y="375.0" width="2" height="2" fill="#7fbdee"/>
<path d="M17,387 h5 l3,3 v9 h-8z" fill="#7fbdee"/>
<rect x="9" y="393" width="9" height="7" fill="#6a727d" stroke="#e2e2e2" stroke-width="1.2"/>
<circle cx="18.5" cy="400.5" r="2.6" fill="#3b4453" stroke="#e2e2e2" stroke-width="1.1" />
<rect x="9" y="415" width="9" height="7" fill="#6a727d" stroke="#e2e2e2" stroke-width="1.2"/>
<circle cx="18.5" cy="422.5" r="2.6" fill="#3b4453" stroke="#e2e2e2" stroke-width="1.1" />
<path d="M20,408 l1,2.5 l2.6,-1 l-1,2.5 l2.4,1 l-2.4,1 l1,2.5 l-2.6,-1 l-1,2.5 l-1,-2.5 l-2.6,1 l1,-2.5 l-2.4,-1 l2.4,-1 l-1,-2.5 l2.6,1z" fill="#f2c14e"/>
<rect x="14.9" y="433.9" width="2.2" height="2.2" fill="#e2e2e2"/>
<rect x="9.9" y="441.9" width="2.2" height="2.2" fill="#e2e2e2"/>
<rect x="19.9" y="441.9" width="2.2" height="2.2" fill="#e2e2e2"/>
<rect x="11" y="456" width="10" height="10" fill="#3f79b5"/>
<path d="M11,462 l6,-6 M11,466 l10,-10 M15,466 l6,-6" stroke="#7fbdee" stroke-width="1"/>
<path d="M11,453 v16 M21,453 v16 M8,456 h16 M8,466 h16" stroke="#e2e2e2" stroke-width="1.1"/>
<defs><linearGradient id="lg1" x1="0" y1="0" x2="0" y2="1"><stop offset="0" stop-color="#cfe6fa"/><stop offset="1" stop-color="#3f79b5"/></linearGradient></defs>
<rect x="11" y="478" width="10" height="10" fill="url(#lg1)"/>
<path d="M11,475 v16 M21,475 v16 M8,478 h16 M8,488 h16" stroke="#e2e2e2" stroke-width="1.1"/>
<path d="M8,499 h11 l5,5 v7 h-16z" fill="#e0e0e0"/>
<circle cx="15" cy="506" r="2.3" fill="#3b4453" stroke="none" stroke-width="0" />
<rect x="8.5" y="520.5" width="15" height="13" fill="none" stroke="#e2e2e2" stroke-width="1.3"/>
<path d="M8.5,524.5 h15 M8.5,528.5 h15 M13.5,524.5 v9 M18.5,524.5 v9" stroke="#e2e2e2" stroke-width="1.1"/>
<rect x="8.5" y="520.5" width="15" height="4" fill="#e2e2e2"/>
<text x="16" y="556" font-size="19" fill="#eeeeee" text-anchor="middle">A</text>
<circle cx="11.5" cy="567" r="3.4" fill="#5fd08a" stroke="none" stroke-width="0" />
<circle cx="20.5" cy="576" r="3.4" fill="#7fbdee" stroke="none" stroke-width="0" />
<path d="M16,567 h4 v3" stroke="#e2e2e2" stroke-width="1.2" fill="none"/>
<path d="M18,569.5 h4 l-2,2.5z" fill="#e2e2e2"/>
<rect x="1703.0" y="137" width="1.2" height="1.2" fill="#c4c9d0"/>
<rect x="1703.0" y="139.5" width="1.2" height="1.2" fill="#c4c9d0"/>
<rect x="1705.3" y="137" width="1.2" height="1.2" fill="#c4c9d0"/>
<rect x="1705.3" y="139.5" width="1.2" height="1.2" fill="#c4c9d0"/>
<rect x="1707.6" y="137" width="1.2" height="1.2" fill="#c4c9d0"/>
<rect x="1707.6" y="139.5" width="1.2" height="1.2" fill="#c4c9d0"/>
<rect x="1709.9" y="137" width="1.2" height="1.2" fill="#c4c9d0"/>
<rect x="1709.9" y="139.5" width="1.2" height="1.2" fill="#c4c9d0"/>
<rect x="1712.2" y="137" width="1.2" height="1.2" fill="#c4c9d0"/>
<rect x="1712.2" y="139.5" width="1.2" height="1.2" fill="#c4c9d0"/>
<rect x="1714.5" y="137" width="1.2" height="1.2" fill="#c4c9d0"/>
<rect x="1714.5" y="139.5" width="1.2" height="1.2" fill="#c4c9d0"/>
<rect x="1716.8" y="137" width="1.2" height="1.2" fill="#c4c9d0"/>
<rect x="1716.8" y="139.5" width="1.2" height="1.2" fill="#c4c9d0"/>
<path d="M1707,155 l9,-11 l3.5,3 l-9,11z" fill="#f2c14e"/>
<path d="M1705,157.5 l2,-2.5 l3.5,3 l-2,2.5z" fill="#f06a6a"/>
<line x1="1703" y1="160.5" x2="1719" y2="160.5" stroke="#e2e2e2" stroke-width="1" />
<circle cx="1706.5" cy="169.5" r="2.8" fill="none" stroke="#e2e2e2" stroke-width="1.2" />
<path d="M1710.5,169.5 h5 v3" stroke="#e2e2e2" stroke-width="1.2" fill="none"/>
<path d="M1713.5,171.5 h4 l-2,2.5z" fill="#e2e2e2"/>
<circle cx="1710.5" cy="178.5" r="2.8" fill="none" stroke="#7fbdee" stroke-width="1.2" />
<circle cx="1716" cy="178.5" r="2.8" fill="none" stroke="#7fbdee" stroke-width="1.2" />
<path d="M1709.8,189 v13 h-6.5z" stroke="#e2e2e2" stroke-width="1.2" fill="none"/>
<path d="M1712.2,189 v13 h6.5z" stroke="#7fbdee" stroke-width="1.2" fill="none"/>
<path d="M1719,212 h-9 a6,6 0 0 0 0,12 h9" stroke="#7fbdee" stroke-width="1.2" fill="none"/>
<path d="M1719,215 h-9 a3,3 0 0 0 0,6 h9" stroke="#e2e2e2" stroke-width="1.2" fill="none"/>
<rect x="1704" y="233" width="5" height="5" fill="none" stroke="#e2e2e2" stroke-width="1.2"/>
<rect x="1712" y="233" width="5" height="5" fill="none" stroke="#7fbdee" stroke-width="1.2"/>
<rect x="1704" y="241" width="5" height="5" fill="none" stroke="#7fbdee" stroke-width="1.2"/>
<rect x="1712" y="241" width="5" height="5" fill="#2f6fae" stroke="#7fbdee" stroke-width="1.2"/>
<path d="M1719,248 h-4 l4,-4z" fill="#e2e2e2"/>
<path d="M1706,262 h10 M1711,257 v10" stroke="#e2e2e2" stroke-width="1.5"/>
<path d="M1703,262 l3.5,-3 v6z M1719,262 l-3.5,-3 v6z M1711,254 l-3,3.5 h6z M1711,270 l-3,-3.5 h6z" fill="#e2e2e2"/>
<path d="M1717.5,285 a6.5,6.5 0 1 1 -4.5,-6.2" stroke="#e2e2e2" stroke-width="1.3" fill="none"/>
<path d="M1711.5,275.5 l4.5,3 l-4.5,3z" fill="#e2e2e2"/>
<path d="M1703.5,304 v-5.5 h15 v15 h-5.5" stroke="#7fbdee" stroke-width="1.2" fill="none"/>
<rect x="1703.5" y="305.5" width="8" height="8" fill="none" stroke="#e2e2e2" stroke-width="1.2"/>
<path d="M1703.5,335 v-14 h7 v14z" stroke="#e2e2e2" stroke-width="1.2" fill="none"/>
<path d="M1712,321 h3 l4,14 h-5" stroke="#7fbdee" stroke-width="1.2" fill="none"/>
<path d="M1709,331 h5" stroke="#e2e2e2" stroke-width="1.2"/>
<path d="M1713.5,328.8 l3,2.2 l-3,2.2z" fill="#e2e2e2"/>
<line x1="1703" y1="343.5" x2="1719" y2="343.5" stroke="#7fbdee" stroke-width="1" stroke-dasharray="2 1.5"/>
<path d="M1706,346 l8,8 M1716,345 l-7,9" stroke="#e2e2e2" stroke-width="1.5"/>
<circle cx="1714.5" cy="356" r="2" fill="none" stroke="#e2e2e2" stroke-width="1.2" />
<circle cx="1708" cy="355.5" r="2" fill="none" stroke="#e2e2e2" stroke-width="1.2" />
<line x1="1704" y1="367.5" x2="1719" y2="367.5" stroke="#e2e2e2" stroke-width="1.3" />
<line x1="1714.5" y1="367.5" x2="1714.5" y2="380" stroke="#e2e2e2" stroke-width="1.3" />
<line x1="1704" y1="375" x2="1712" y2="375" stroke="#7fbdee" stroke-width="1.1" stroke-dasharray="2 1.5"/>
<path d="M1710,373 l3,2 l-3,2z" fill="#e2e2e2"/>
<path d="M1709.5,389 h-6 v12 h15 v-12 h-3" stroke="#e2e2e2" stroke-width="1.2" fill="none"/>
<line x1="1712.5" y1="386" x2="1712.5" y2="391" stroke="#7fbdee" stroke-width="1.2" />
<path d="M1708,411 h-4.5 v12 h15 v-12 h-4.5" stroke="#e2e2e2" stroke-width="1.2" fill="none"/>
<path d="M1708,408 v5 M1714,408 v5" stroke="#7fbdee" stroke-width="1.2"/>
<line x1="1703" y1="438" x2="1719" y2="438" stroke="#e2e2e2" stroke-width="1.2" />
<path d="M1707,435 l4,3 l-4,3z M1715,435 l-4,3 l4,3z" fill="#7fbdee"/>
<path d="M1704,468 v-5 l8,-9 h6" stroke="#e2e2e2" stroke-width="1.2" fill="none" stroke-dasharray="7 2"/>
<path d="M1704,490 v-4 c0,-7 3,-10 9,-10 h5" stroke="#e2e2e2" stroke-width="1.2" fill="none" stroke-dasharray="7 2"/>
<path d="M1704,511 c0,-8 4,-8 7,-7 s7,0 7,-7" stroke="#7fbdee" stroke-width="1.3" fill="none"/>
<path d="M1704,511 v-4 M1718,497 v4" stroke="#e2e2e2" stroke-width="1.3"/>
<path d="M1703.5,523 l4,-4 h11 v11 l-4,4 h-11z M1703.5,523 h11 v11 M1714.5,523 l4,-4" stroke="#7fbdee" stroke-width="1.2" fill="none"/>
<rect x="1706" y="525.5" width="6" height="6" fill="none" stroke="#e2e2e2" stroke-width="1.1"/>
</g>
<g id="drawing">
<line x1="33" y1="1228.6" x2="1695" y2="1228.6" stroke="#ffffff" stroke-width="1.38" />
<line x1="1640.6" y1="133" x2="1640.6" y2="1228.6" stroke="#ffffff" stroke-width="1.38" />
<rect x="89.2" y="136.7" width="1549.8" height="1094.6" fill="none" stroke="#00e6e6" stroke-width="1.62"/>
<rect x="154.7" y="162.4" width="1458.2" height="1044.4" fill="none" stroke="#ffffff" stroke-width="1.5"/>
<rect x="1634.5" y="1222.5" width="12" height="12" fill="none" stroke="#ffffff" stroke-width="1.38"/>
<text x="36" y="151.5" font-size="12" fill="#0b0e12" textLength="107" lengthAdjust="spacingAndGlyphs">[-][俯视][二维线框]</text>
<line x1="351.3" y1="305" x2="351.3" y2="772.5" stroke="#ff0000" stroke-width="1.5" />
<line x1="421.3" y1="305" x2="421.3" y2="557" stroke="#ff0000" stroke-width="1.5" />
<line x1="484.8" y1="305" x2="484.8" y2="805" stroke="#ff0000" stroke-width="1.5" />
<line x1="641.3" y1="305" x2="641.3" y2="805" stroke="#ff0000" stroke-width="1.5" />
<line x1="797.6" y1="305" x2="797.6" y2="805" stroke="#ff0000" stroke-width="1.5" />
<line x1="954" y1="305" x2="954" y2="805" stroke="#ff0000" stroke-width="1.5" />
<line x1="1110.3" y1="305" x2="1110.3" y2="805" stroke="#ff0000" stroke-width="1.5" />
<line x1="1266.8" y1="305" x2="1266.8" y2="805" stroke="#ff0000" stroke-width="1.5" />
<line x1="316.5" y1="328.6" x2="1280" y2="328.6" stroke="#ff0000" stroke-width="1.5" />
<line x1="316.5" y1="719.2" x2="1280" y2="719.2" stroke="#ff0000" stroke-width="1.5" />
<line x1="341" y1="469.2" x2="484.8" y2="469.2" stroke="#ff0000" stroke-width="1.5" />
<line x1="341" y1="554.9" x2="484.8" y2="554.9" stroke="#ff0000" stroke-width="1.5" />
<line x1="551.3" y1="323.5" x2="551.3" y2="425" stroke="#ff0000" stroke-width="1.5" />
<line x1="351.3" y1="829.2" x2="1266.8" y2="829.2" stroke="#ffffff" stroke-width="1.5" />
<line x1="351.3" y1="774" x2="351.3" y2="835" stroke="#ffffff" stroke-width="1.5" />
<path d="M351.3,829.2 l9,-1.8 v3.6z" fill="#ffffff"/>
<line x1="484.8" y1="806" x2="484.8" y2="835" stroke="#ffffff" stroke-width="1.5" />
<path d="M484.8,829.2 l-9,-1.8 v3.6z" fill="#ffffff"/>
<path d="M484.8,829.2 l9,-1.8 v3.6z" fill="#ffffff"/>
<line x1="641.3" y1="806" x2="641.3" y2="835" stroke="#ffffff" stroke-width="1.5" />
<path d="M641.3,829.2 l-9,-1.8 v3.6z" fill="#ffffff"/>
<path d="M641.3,829.2 l9,-1.8 v3.6z" fill="#ffffff"/>
<line x1="797.6" y1="806" x2="797.6" y2="835" stroke="#ffffff" stroke-width="1.5" />
<path d="M797.6,829.2 l-9,-1.8 v3.6z" fill="#ffffff"/>
<path d="M797.6,829.2 l9,-1.8 v3.6z" fill="#ffffff"/>
<line x1="954" y1="806" x2="954" y2="835" stroke="#ffffff" stroke-width="1.5" />
<path d="M954,829.2 l-9,-1.8 v3.6z" fill="#ffffff"/>
<path d="M954,829.2 l9,-1.8 v3.6z" fill="#ffffff"/>
<line x1="1110.3" y1="806" x2="1110.3" y2="835" stroke="#ffffff" stroke-width="1.5" />
<path d="M1110.3,829.2 l-9,-1.8 v3.6z" fill="#ffffff"/>
<path d="M1110.3,829.2 l9,-1.8 v3.6z" fill="#ffffff"/>
<line x1="1266.8" y1="806" x2="1266.8" y2="835" stroke="#ffffff" stroke-width="1.5" />
<path d="M1266.8,829.2 l-9,-1.8 v3.6z" fill="#ffffff"/>
<text x="417.5" y="824.5" font-size="12" fill="#ffffff" text-anchor="middle" font-family='"Liberation Sans","Noto Sans CJK SC",sans-serif' font-weight="300">4800</text>
<text x="566" y="824.5" font-size="12" fill="#ffffff" text-anchor="middle" font-family='"Liberation Sans","Noto Sans CJK SC",sans-serif' font-weight="300">6000</text>
<text x="727" y="824.5" font-size="12" fill="#ffffff" text-anchor="middle" font-family='"Liberation Sans","Noto Sans CJK SC",sans-serif' font-weight="300">6000</text>
<text x="871" y="824.5" font-size="12" fill="#ffffff" text-anchor="middle" font-family='"Liberation Sans","Noto Sans CJK SC",sans-serif' font-weight="300">6000</text>
<text x="1031" y="824.5" font-size="12" fill="#ffffff" text-anchor="middle" font-family='"Liberation Sans","Noto Sans CJK SC",sans-serif' font-weight="300">6000</text>
<text x="1177" y="824.5" font-size="12" fill="#ffffff" text-anchor="middle" font-family='"Liberation Sans","Noto Sans CJK SC",sans-serif' font-weight="300">6000</text>
<line x1="288" y1="328.6" x2="316.5" y2="328.6" stroke="#ffffff" stroke-width="1.5" />
<line x1="288" y1="719.2" x2="316.5" y2="719.2" stroke="#ffffff" stroke-width="1.5" />
<line x1="293" y1="328.6" x2="293" y2="719.2" stroke="#ffffff" stroke-width="1.5" />
<path d="M293,328.6 l-1.8,9 h3.6z" fill="#ffffff"/>
<path d="M293,719.2 l-1.8,-9 h3.6z" fill="#ffffff"/>
<text x="0" y="0" font-size="12" fill="#ffffff" text-anchor="middle" font-family='"Liberation Sans","Noto Sans CJK SC",sans-serif' font-weight="300" transform="translate(291.5 510) rotate(-90)">15000</text>
<polyline points="480,325.4 348.3,325.4 348.3,722.6" fill="none" stroke="#00ffff" stroke-width="1.5" />
<polyline points="480,331.5 354.3,331.5 354.3,465.5 481.6,465.5" fill="none" stroke="#00ffff" stroke-width="1.5" />
<line x1="387.4" y1="325.4" x2="440.6" y2="325.4" stroke="#ffff00" stroke-width="1.38" />
<line x1="387.4" y1="327.43" x2="440.6" y2="327.43" stroke="#ffff00" stroke-width="1.38" />
<line x1="387.4" y1="329.47" x2="440.6" y2="329.47" stroke="#ffff00" stroke-width="1.38" />
<line x1="387.4" y1="331.5" x2="440.6" y2="331.5" stroke="#ffff00" stroke-width="1.38" />
<line x1="387.4" y1="325.4" x2="387.4" y2="331.5" stroke="#ffff00" stroke-width="1.38" />
<line x1="440.6" y1="325.4" x2="440.6" y2="331.5" stroke="#ffff00" stroke-width="1.38" />
<polyline points="481.6,331.5 481.6,418.9 487.3,418.9 487.3,339.5" fill="none" stroke="#00ffff" stroke-width="1.5" />
<rect x="481.6" y="458.3" width="5.7" height="32" fill="none" stroke="#00ffff" stroke-width="1.5"/>
<polyline points="354.3,551.1 354.3,472.9 418.2,472.9 418.2,530" fill="none" stroke="#00ffff" stroke-width="1.5" />
<polyline points="425.2,529 425.2,472.9 481.6,472.9" fill="none" stroke="#00ffff" stroke-width="1.5" />
<polyline points="354.3,551.1 419.4,551.1 421.5,552.3 426,552.3 487.3,552.3 487.3,685.2 481.6,685.2 481.6,558.8 354.3,558.8 354.3,716.6 363,716.6" fill="none" stroke="#00ffff" stroke-width="1.5" />
<line x1="385.5" y1="716.6" x2="479.7" y2="716.6" stroke="#00ffff" stroke-width="1.5" />
<line x1="348.3" y1="722.6" x2="479.7" y2="722.6" stroke="#ffffff" stroke-width="1.5" />
<line x1="398.3" y1="716.6" x2="445.7" y2="716.6" stroke="#ffff00" stroke-width="1.38" />
<line x1="398.3" y1="718.6" x2="445.7" y2="718.6" stroke="#ffff00" stroke-width="1.38" />
<line x1="398.3" y1="720.6" x2="445.7" y2="720.6" stroke="#ffff00" stroke-width="1.38" />
<line x1="398.3" y1="722.6" x2="445.7" y2="722.6" stroke="#ffff00" stroke-width="1.38" />
<line x1="398.3" y1="716.6" x2="398.3" y2="722.6" stroke="#ffff00" stroke-width="1.38" />
<line x1="445.7" y1="716.6" x2="445.7" y2="722.6" stroke="#ffff00" stroke-width="1.38" />
<line x1="349.0" y1="484.5" x2="349.0" y2="515.2" stroke="#ffff00" stroke-width="1.38" />
<line x1="350.9" y1="484.5" x2="350.9" y2="515.2" stroke="#ffff00" stroke-width="1.38" />
<line x1="352.8" y1="484.5" x2="352.8" y2="515.2" stroke="#ffff00" stroke-width="1.38" />
<line x1="354.7" y1="484.5" x2="354.7" y2="515.2" stroke="#ffff00" stroke-width="1.38" />
<line x1="349" y1="484.5" x2="354.7" y2="484.5" stroke="#ffff00" stroke-width="1.38" />
<line x1="349" y1="515.2" x2="354.7" y2="515.2" stroke="#ffff00" stroke-width="1.38" />
<line x1="348.7" y1="722.6" x2="348.7" y2="753.1" stroke="#ffff00" stroke-width="1.5" />
<line x1="348.7" y1="753.1" x2="479.3" y2="753.1" stroke="#00ffff" stroke-width="1.5" />
<polyline points="484.8,420.2 502.7,420.2 500.1,430.5 492.5,436.2 484.8,438.1 492.5,440 500.1,446 502.7,456.3 484.8,456.5" fill="none" stroke="#ffff00" stroke-width="1.5" />
<polyline points="382.3,473.6 382.3,498.6 416.9,498.6 416.9,473.6" fill="none" stroke="#ffff00" stroke-width="1.5" />
<line x1="382.3" y1="473.6" x2="416.9" y2="473.6" stroke="#80ff80" stroke-width="1.5" />
<polyline points="384.2,473.6 384.2,496.6 392.5,496.6 392.5,498.6" fill="none" stroke="#ffff00" stroke-width="1.25" />
<polyline points="415,473.6 415,496.6 408.5,496.6 408.5,498.6" fill="none" stroke="#ffff00" stroke-width="1.25" />
<line x1="394" y1="503.5" x2="408" y2="498.8" stroke="#ffff00" stroke-width="1.38" />
<ellipse cx="400.3" cy="484.4" rx="7" ry="4" fill="none" stroke="#ffff00" stroke-width="1.62"/>
<ellipse cx="399.4" cy="484.4" rx="3.5" ry="1.6" fill="none" stroke="#ffff00" stroke-width="1.25"/>
<path d="M363.3,474.5 c-1,4 1,8 5.5,9 c4.5,-1 6.5,-5 5.5,-9 M366,476 a3,3 0 0 0 5.6,0 M367.3,480.5 l1.5,1.5 l1.5,-1.5" fill="none" stroke="#ffff00" stroke-width="1.62"/>
<rect x="356" y="536" width="16.7" height="15.1" fill="none" stroke="#ffff00" stroke-width="1.5"/>
<rect x="357.8" y="537.8" width="13.1" height="11.5" fill="none" stroke="#ffff00" stroke-width="1.25"/>
<path d="M357.8,537.8 l13.1,11.5 M370.9,537.8 l-13.1,11.5" stroke="#ffff00" stroke-width="1.25"/>
<polyline points="481.6,487.7 440.6,487.7 440.6,529.1 426,529.1 426,488.5" fill="none" stroke="#ffff00" stroke-width="1.5" />
<path d="M427,489.3 h4 c4,0 7,3.5 7,8 s-3,8 -7,8 h-4z" fill="none" stroke="#ffff00" stroke-width="1.62"/>
<path d="M428.5,491.8 h2.5 c3,0 5,2.5 5,5.5 s-2,5.5 -5,5.5 h-2.5" fill="none" stroke="#ffff00" stroke-width="1.25"/>
<rect x="430" y="496.6" width="1.4" height="1.4" fill="#ffff00"/>
<path d="M427,511.20000000000005 h4 c4,0 7,3.5 7,8 s-3,8 -7,8 h-4z" fill="none" stroke="#ffff00" stroke-width="1.62"/>
<path d="M428.5,513.7 h2.5 c3,0 5,2.5 5,5.5 s-2,5.5 -5,5.5 h-2.5" fill="none" stroke="#ffff00" stroke-width="1.25"/>
<rect x="430" y="518.5" width="1.4" height="1.4" fill="#ffff00"/>
<polyline points="419.4,530.3 412,534 405.3,540.2 403,549.6 419.4,549.6" fill="none" stroke="#ffff00" stroke-width="1.5" />
<polyline points="484.8,707.6 462.4,707.4 465.6,696.1 473.2,688.4 484.8,685.8" fill="none" stroke="#ffff00" stroke-width="1.5" />
<polyline points="363.1,720.4 363.1,697.4 374.6,700.6 382.3,707.6 385.5,716.6 385.5,722.4" fill="none" stroke="#ffff00" stroke-width="1.5" />
<rect x="377.2" y="577.4" width="89.6" height="30.1" fill="none" stroke="#ffffff" stroke-width="1.5"/>
<text x="425" y="628" font-size="18" fill="#e0e0e0" text-anchor="middle" font-family='"Liberation Serif","Noto Serif CJK SC",serif' letter-spacing="1.5">配电柜</text>
<text x="386.5" y="407.5" font-size="10.5" fill="#ffffff" font-weight="bold">药剂库</text>
<text x="381.5" y="673" font-size="10.5" fill="#ffffff" font-weight="bold">配电值班室</text>
<polyline points="481.3,331 481.3,317.4 1270.9,317.4 1270.9,685.6 1263.8,685.6 1263.8,323.5 487.3,323.5" fill="none" stroke="#00ffff" stroke-width="1.5" />
<line x1="509.1" y1="317.4" x2="556.3" y2="317.4" stroke="#ffff00" stroke-width="1.38" />
<line x1="509.1" y1="319.43" x2="556.3" y2="319.43" stroke="#ffff00" stroke-width="1.38" />
<line x1="509.1" y1="321.47" x2="556.3" y2="321.47" stroke="#ffff00" stroke-width="1.38" />
<line x1="509.1" y1="323.5" x2="556.3" y2="323.5" stroke="#ffff00" stroke-width="1.38" />
<line x1="509.1" y1="317.4" x2="509.1" y2="323.5" stroke="#ffff00" stroke-width="1.38" />
<line x1="556.3" y1="317.4" x2="556.3" y2="323.5" stroke="#ffff00" stroke-width="1.38" />
<line x1="569.2" y1="317.4" x2="616.3" y2="317.4" stroke="#ffff00" stroke-width="1.38" />
<line x1="569.2" y1="319.43" x2="616.3" y2="319.43" stroke="#ffff00" stroke-width="1.38" />
<line x1="569.2" y1="321.47" x2="616.3" y2="321.47" stroke="#ffff00" stroke-width="1.38" />
<line x1="569.2" y1="323.5" x2="616.3" y2="323.5" stroke="#ffff00" stroke-width="1.38" />
<line x1="569.2" y1="317.4" x2="569.2" y2="323.5" stroke="#ffff00" stroke-width="1.38" />
<line x1="616.3" y1="317.4" x2="616.3" y2="323.5" stroke="#ffff00" stroke-width="1.38" />
<line x1="665.0" y1="317.4" x2="712.6" y2="317.4" stroke="#ffff00" stroke-width="1.38" />
<line x1="665.0" y1="319.43" x2="712.6" y2="319.43" stroke="#ffff00" stroke-width="1.38" />
<line x1="665.0" y1="321.47" x2="712.6" y2="321.47" stroke="#ffff00" stroke-width="1.38" />
<line x1="665.0" y1="323.5" x2="712.6" y2="323.5" stroke="#ffff00" stroke-width="1.38" />
<line x1="665.0" y1="317.4" x2="665.0" y2="323.5" stroke="#ffff00" stroke-width="1.38" />
<line x1="712.6" y1="317.4" x2="712.6" y2="323.5" stroke="#ffff00" stroke-width="1.38" />
<line x1="724.8" y1="317.4" x2="772.3" y2="317.4" stroke="#ffff00" stroke-width="1.38" />
<line x1="724.8" y1="319.43" x2="772.3" y2="319.43" stroke="#ffff00" stroke-width="1.38" />
<line x1="724.8" y1="321.47" x2="772.3" y2="321.47" stroke="#ffff00" stroke-width="1.38" />
<line x1="724.8" y1="323.5" x2="772.3" y2="323.5" stroke="#ffff00" stroke-width="1.38" />
<line x1="724.8" y1="317.4" x2="724.8" y2="323.5" stroke="#ffff00" stroke-width="1.38" />
<line x1="772.3" y1="317.4" x2="772.3" y2="323.5" stroke="#ffff00" stroke-width="1.38" />
<line x1="821.4" y1="317.4" x2="869.0" y2="317.4" stroke="#ffff00" stroke-width="1.38" />
<line x1="821.4" y1="319.43" x2="869.0" y2="319.43" stroke="#ffff00" stroke-width="1.38" />
<line x1="821.4" y1="321.47" x2="869.0" y2="321.47" stroke="#ffff00" stroke-width="1.38" />
<line x1="821.4" y1="323.5" x2="869.0" y2="323.5" stroke="#ffff00" stroke-width="1.38" />
<line x1="821.4" y1="317.4" x2="821.4" y2="323.5" stroke="#ffff00" stroke-width="1.38" />
<line x1="869.0" y1="317.4" x2="869.0" y2="323.5" stroke="#ffff00" stroke-width="1.38" />
<line x1="881.2" y1="317.4" x2="928.7" y2="317.4" stroke="#ffff00" stroke-width="1.38" />
<line x1="881.2" y1="319.43" x2="928.7" y2="319.43" stroke="#ffff00" stroke-width="1.38" />
<line x1="881.2" y1="321.47" x2="928.7" y2="321.47" stroke="#ffff00" stroke-width="1.38" />
<line x1="881.2" y1="323.5" x2="928.7" y2="323.5" stroke="#ffff00" stroke-width="1.38" />
<line x1="881.2" y1="317.4" x2="881.2" y2="323.5" stroke="#ffff00" stroke-width="1.38" />
<line x1="928.7" y1="317.4" x2="928.7" y2="323.5" stroke="#ffff00" stroke-width="1.38" />
<line x1="977.7" y1="317.4" x2="1025.3" y2="317.4" stroke="#ffff00" stroke-width="1.38" />
<line x1="977.7" y1="319.43" x2="1025.3" y2="319.43" stroke="#ffff00" stroke-width="1.38" />
<line x1="977.7" y1="321.47" x2="1025.3" y2="321.47" stroke="#ffff00" stroke-width="1.38" />
<line x1="977.7" y1="323.5" x2="1025.3" y2="323.5" stroke="#ffff00" stroke-width="1.38" />
<line x1="977.7" y1="317.4" x2="977.7" y2="323.5" stroke="#ffff00" stroke-width="1.38" />
<line x1="1025.3" y1="317.4" x2="1025.3" y2="323.5" stroke="#ffff00" stroke-width="1.38" />
<line x1="1037.5" y1="317.4" x2="1085.0" y2="317.4" stroke="#ffff00" stroke-width="1.38" />
<line x1="1037.5" y1="319.43" x2="1085.0" y2="319.43" stroke="#ffff00" stroke-width="1.38" />
<line x1="1037.5" y1="321.47" x2="1085.0" y2="321.47" stroke="#ffff00" stroke-width="1.38" />
<line x1="1037.5" y1="323.5" x2="1085.0" y2="323.5" stroke="#ffff00" stroke-width="1.38" />
<line x1="1037.5" y1="317.4" x2="1037.5" y2="323.5" stroke="#ffff00" stroke-width="1.38" />
<line x1="1085.0" y1="317.4" x2="1085.0" y2="323.5" stroke="#ffff00" stroke-width="1.38" />
<line x1="1134.1" y1="317.4" x2="1181.7" y2="317.4" stroke="#ffff00" stroke-width="1.38" />
<line x1="1134.1" y1="319.43" x2="1181.7" y2="319.43" stroke="#ffff00" stroke-width="1.38" />
<line x1="1134.1" y1="321.47" x2="1181.7" y2="321.47" stroke="#ffff00" stroke-width="1.38" />
<line x1="1134.1" y1="323.5" x2="1181.7" y2="323.5" stroke="#ffff00" stroke-width="1.38" />
<line x1="1134.1" y1="317.4" x2="1134.1" y2="323.5" stroke="#ffff00" stroke-width="1.38" />
<line x1="1181.7" y1="317.4" x2="1181.7" y2="323.5" stroke="#ffff00" stroke-width="1.38" />
<line x1="1193.9" y1="317.4" x2="1241.4" y2="317.4" stroke="#ffff00" stroke-width="1.38" />
<line x1="1193.9" y1="319.43" x2="1241.4" y2="319.43" stroke="#ffff00" stroke-width="1.38" />
<line x1="1193.9" y1="321.47" x2="1241.4" y2="321.47" stroke="#ffff00" stroke-width="1.38" />
<line x1="1193.9" y1="323.5" x2="1241.4" y2="323.5" stroke="#ffff00" stroke-width="1.38" />
<line x1="1193.9" y1="317.4" x2="1193.9" y2="323.5" stroke="#ffff00" stroke-width="1.38" />
<line x1="1241.4" y1="317.4" x2="1241.4" y2="323.5" stroke="#ffff00" stroke-width="1.38" />
<rect x="479.2" y="322.3" width="4.4" height="17.2" fill="#00ffff"/>
<rect x="485.8" y="322.3" width="4.4" height="17.2" fill="#00ffff"/>
<rect x="635.7" y="322.3" width="4.4" height="17.2" fill="#00ffff"/>
<rect x="642.3" y="322.3" width="4.4" height="17.2" fill="#00ffff"/>
<rect x="792.0" y="322.3" width="4.4" height="17.2" fill="#00ffff"/>
<rect x="798.6" y="322.3" width="4.4" height="17.2" fill="#00ffff"/>
<rect x="948.4" y="322.3" width="4.4" height="17.2" fill="#00ffff"/>
<rect x="955.0" y="322.3" width="4.4" height="17.2" fill="#00ffff"/>
<rect x="1104.7" y="322.3" width="4.4" height="17.2" fill="#00ffff"/>
<rect x="1111.3" y="322.3" width="4.4" height="17.2" fill="#00ffff"/>
<rect x="1261.2" y="322.3" width="4.4" height="17.2" fill="#00ffff"/>
<rect x="1267.8" y="322.3" width="4.4" height="17.2" fill="#00ffff"/>
<rect x="479.4" y="708.3" width="4.2" height="14.3" fill="#00ffff"/>
<rect x="485.8" y="708.3" width="4.2" height="16.6" fill="#00ffff"/>
<rect x="635.5" y="707.8" width="4.6" height="16.5" fill="#00ffff"/>
<rect x="642.3" y="707.8" width="4.6" height="16.5" fill="#00ffff"/>
<rect x="791.8" y="707.8" width="4.6" height="16.5" fill="#00ffff"/>
<rect x="798.6" y="707.8" width="4.6" height="16.5" fill="#00ffff"/>
<rect x="948.2" y="707.8" width="4.6" height="16.5" fill="#00ffff"/>
<rect x="955.0" y="707.8" width="4.6" height="16.5" fill="#00ffff"/>
<rect x="1104.5" y="707.8" width="4.6" height="16.5" fill="#00ffff"/>
<rect x="1111.3" y="707.8" width="4.6" height="16.5" fill="#00ffff"/>
<polyline points="480.9,724.3 516.2,724.3 516.2,730.6 480.9,730.6 480.9,722.6" fill="none" stroke="#00ffff" stroke-width="1.5" />
<rect x="609.2" y="724.3" width="376.3" height="6.3" fill="none" stroke="#00ffff" stroke-width="1.5"/>
<rect x="1079.3" y="724.3" width="319.7" height="6.3" fill="none" stroke="#00ffff" stroke-width="1.5"/>
<line x1="665" y1="724.3" x2="713.1" y2="724.3" stroke="#ffff00" stroke-width="1.38" />
<line x1="665" y1="726.4" x2="713.1" y2="726.4" stroke="#ffff00" stroke-width="1.38" />
<line x1="665" y1="728.5" x2="713.1" y2="728.5" stroke="#ffff00" stroke-width="1.38" />
<line x1="665" y1="730.6" x2="713.1" y2="730.6" stroke="#ffff00" stroke-width="1.38" />
<line x1="665" y1="724.3" x2="665" y2="730.6" stroke="#ffff00" stroke-width="1.38" />
<line x1="713.1" y1="724.3" x2="713.1" y2="730.6" stroke="#ffff00" stroke-width="1.38" />
<line x1="725.3" y1="724.3" x2="772.9" y2="724.3" stroke="#ffff00" stroke-width="1.38" />
<line x1="725.3" y1="726.4" x2="772.9" y2="726.4" stroke="#ffff00" stroke-width="1.38" />
<line x1="725.3" y1="728.5" x2="772.9" y2="728.5" stroke="#ffff00" stroke-width="1.38" />
<line x1="725.3" y1="730.6" x2="772.9" y2="730.6" stroke="#ffff00" stroke-width="1.38" />
<line x1="725.3" y1="724.3" x2="725.3" y2="730.6" stroke="#ffff00" stroke-width="1.38" />
<line x1="772.9" y1="724.3" x2="772.9" y2="730.6" stroke="#ffff00" stroke-width="1.38" />
<line x1="822.3" y1="724.3" x2="869.6" y2="724.3" stroke="#ffff00" stroke-width="1.38" />
<line x1="822.3" y1="726.4" x2="869.6" y2="726.4" stroke="#ffff00" stroke-width="1.38" />
<line x1="822.3" y1="728.5" x2="869.6" y2="728.5" stroke="#ffff00" stroke-width="1.38" />
<line x1="822.3" y1="730.6" x2="869.6" y2="730.6" stroke="#ffff00" stroke-width="1.38" />
<line x1="822.3" y1="724.3" x2="822.3" y2="730.6" stroke="#ffff00" stroke-width="1.38" />
<line x1="869.6" y1="724.3" x2="869.6" y2="730.6" stroke="#ffff00" stroke-width="1.38" />
<line x1="882.8" y1="724.3" x2="930.1" y2="724.3" stroke="#ffff00" stroke-width="1.38" />
<line x1="882.8" y1="726.4" x2="930.1" y2="726.4" stroke="#ffff00" stroke-width="1.38" />
<line x1="882.8" y1="728.5" x2="930.1" y2="728.5" stroke="#ffff00" stroke-width="1.38" />
<line x1="882.8" y1="730.6" x2="930.1" y2="730.6" stroke="#ffff00" stroke-width="1.38" />
<line x1="882.8" y1="724.3" x2="882.8" y2="730.6" stroke="#ffff00" stroke-width="1.38" />
<line x1="930.1" y1="724.3" x2="930.1" y2="730.6" stroke="#ffff00" stroke-width="1.38" />
<line x1="1135.7" y1="724.3" x2="1182.7" y2="724.3" stroke="#ffff00" stroke-width="1.38" />
<line x1="1135.7" y1="726.4" x2="1182.7" y2="726.4" stroke="#ffff00" stroke-width="1.38" />
<line x1="1135.7" y1="728.5" x2="1182.7" y2="728.5" stroke="#ffff00" stroke-width="1.38" />
<line x1="1135.7" y1="730.6" x2="1182.7" y2="730.6" stroke="#ffff00" stroke-width="1.38" />
<line x1="1135.7" y1="724.3" x2="1135.7" y2="730.6" stroke="#ffff00" stroke-width="1.38" />
<line x1="1182.7" y1="724.3" x2="1182.7" y2="730.6" stroke="#ffff00" stroke-width="1.38" />
<line x1="1195.5" y1="724.3" x2="1242.3" y2="724.3" stroke="#ffff00" stroke-width="1.38" />
<line x1="1195.5" y1="726.4" x2="1242.3" y2="726.4" stroke="#ffff00" stroke-width="1.38" />
<line x1="1195.5" y1="728.5" x2="1242.3" y2="728.5" stroke="#ffff00" stroke-width="1.38" />
<line x1="1195.5" y1="730.6" x2="1242.3" y2="730.6" stroke="#ffff00" stroke-width="1.38" />
<line x1="1195.5" y1="724.3" x2="1195.5" y2="730.6" stroke="#ffff00" stroke-width="1.38" />
<line x1="1242.3" y1="724.3" x2="1242.3" y2="730.6" stroke="#ffff00" stroke-width="1.38" />
<line x1="1291.7" y1="724.3" x2="1338" y2="724.3" stroke="#ffff00" stroke-width="1.38" />
<line x1="1291.7" y1="726.4" x2="1338" y2="726.4" stroke="#ffff00" stroke-width="1.38" />
<line x1="1291.7" y1="728.5" x2="1338" y2="728.5" stroke="#ffff00" stroke-width="1.38" />
<line x1="1291.7" y1="730.6" x2="1338" y2="730.6" stroke="#ffff00" stroke-width="1.38" />
<line x1="1291.7" y1="724.3" x2="1291.7" y2="730.6" stroke="#ffff00" stroke-width="1.38" />
<line x1="1338" y1="724.3" x2="1338" y2="730.6" stroke="#ffff00" stroke-width="1.38" />
<line x1="1351.5" y1="724.3" x2="1399" y2="724.3" stroke="#ffff00" stroke-width="1.38" />
<line x1="1351.5" y1="726.4" x2="1399" y2="726.4" stroke="#ffff00" stroke-width="1.38" />
<line x1="1351.5" y1="728.5" x2="1399" y2="728.5" stroke="#ffff00" stroke-width="1.38" />
<line x1="1351.5" y1="730.6" x2="1399" y2="730.6" stroke="#ffff00" stroke-width="1.38" />
<line x1="1351.5" y1="724.3" x2="1351.5" y2="730.6" stroke="#ffff00" stroke-width="1.38" />
<line x1="1399" y1="724.3" x2="1399" y2="730.6" stroke="#ffff00" stroke-width="1.38" />
<rect x="869.6" y="724.3" width="13.2" height="6.3" fill="#212830" stroke="#ffffff" stroke-width="1.38"/>
<polyline points="1263.8,724.3 1263.8,707.7 1270.9,707.7 1270.9,724.3" fill="none" stroke="#00ffff" stroke-width="1.5" />
<polyline points="1270.3,686.3 1270.3,707.7 1244.4,707.1 1247.5,697.3 1256,689.5 1270.3,686.3" fill="none" stroke="#ffff00" stroke-width="1.5" />
<polyline points="479.5,731 479.5,785.1 645.6,785.1" fill="none" stroke="#ffff00" stroke-width="1.5" />
<line x1="646.3" y1="730.6" x2="646.3" y2="785.1" stroke="#00ffff" stroke-width="1.5" />
<rect x="636.4" y="777.8" width="4" height="7.3" fill="#00ffff"/>
<rect x="641.8" y="777.8" width="3.6" height="7.3" fill="#00ffff"/>
<polyline points="518.3,719.4 518.3,763.5 532.5,760.9 545.5,754.5 555.9,742.8 561.1,732.4 563,719.4 565,732.4 570.2,742.8 580.6,754.5 593.6,760.9 607.1,763.5 607.1,719.4" fill="none" stroke="#ffff00" stroke-width="1.5" />
<polyline points="948.3,730.6 948.3,793.4 1115.7,793.4 1115.7,730.6" fill="none" stroke="#ffff00" stroke-width="1.5" />
<line x1="960" y1="731" x2="949.6" y2="789.5" stroke="#ffff00" stroke-width="1.38" />
<line x1="1104.8" y1="731" x2="1114.4" y2="792.1" stroke="#ffff00" stroke-width="1.38" />
<line x1="985.5" y1="730.8" x2="1079.3" y2="730.8" stroke="#ffff00" stroke-width="1.38" />
<polyline points="988.1,730.6 988.1,771.4 1002.9,768.8 1015.9,762.3 1026.3,749.3 1030.7,738.9 1032.4,726.6 1033.8,737.6 1039,748 1049.4,761 1062.4,768.8 1077.2,771.4 1077.2,730.6" fill="none" stroke="#ffff00" stroke-width="1.5" />
<polyline points="487.3,323.5 487.3,385.6" fill="none" stroke="#ffffff" stroke-width="1.5" />
<line x1="487.3" y1="323.6" x2="611.7" y2="323.6" stroke="#ffffff" stroke-width="1.5" />
<line x1="611.7" y1="323.6" x2="611.7" y2="385.6" stroke="#ffffff" stroke-width="1.5" />
<line x1="469.4" y1="385.6" x2="611.7" y2="385.6" stroke="#ffffff" stroke-width="1.5" />
<line x1="470.7" y1="328.6" x2="470.7" y2="385.6" stroke="#ffffff" stroke-width="1.5" />
<path d="M470.7,328.6 l-1.8,9 h3.6z" fill="#ffffff"/>
<path d="M470.7,385.6 l-1.8,-9 h3.6z" fill="#ffffff"/>
<text x="0" y="0" font-size="12" fill="#ffffff" text-anchor="middle" font-family='"Liberation Sans","Noto Sans CJK SC",sans-serif' font-weight="300" transform="translate(469 357.5) rotate(-90)">2500</text>
<line x1="542.4" y1="385.6" x2="542.4" y2="410" stroke="#ffffff" stroke-width="1.38" />
<line x1="559.4" y1="385.6" x2="559.4" y2="410" stroke="#ffffff" stroke-width="1.38" />
<line x1="542.4" y1="389.6" x2="559.4" y2="389.6" stroke="#ffffff" stroke-width="1.38" />
<line x1="542.4" y1="393.7" x2="559.4" y2="393.7" stroke="#ffffff" stroke-width="1.38" />
<line x1="542.4" y1="397.8" x2="559.4" y2="397.8" stroke="#ffffff" stroke-width="1.38" />
<line x1="542.4" y1="401.9" x2="559.4" y2="401.9" stroke="#ffffff" stroke-width="1.38" />
<line x1="542.4" y1="406" x2="559.4" y2="406" stroke="#ffffff" stroke-width="1.38" />
<line x1="542.4" y1="410" x2="559.4" y2="410" stroke="#ffffff" stroke-width="1.38" />
<line x1="484.8" y1="422.7" x2="611.7" y2="422.7" stroke="#ffffff" stroke-width="1.5" />
<line x1="611.7" y1="385.6" x2="611.7" y2="427" stroke="#00ff00" stroke-width="1.5" />
<line x1="551.3" y1="410" x2="551.3" y2="427" stroke="#ffffff" stroke-width="1.5" />
<path d="M484.8,422.7 l9,-1.8 v3.6z" fill="#ffffff"/>
<path d="M551.3,422.7 l-9,-1.8 v3.6z" fill="#ffffff"/>
<path d="M551.3,422.7 l9,-1.8 v3.6z" fill="#ffffff"/>
<path d="M611.7,422.7 l-9,-1.8 v3.6z" fill="#ffffff"/>
<text x="525" y="419.5" font-size="12" fill="#ffffff" text-anchor="middle" font-family='"Liberation Sans","Noto Sans CJK SC",sans-serif' font-weight="300">2000</text>
<text x="580" y="420" font-size="12" fill="#ffffff" text-anchor="middle" font-family='"Liberation Sans","Noto Sans CJK SC",sans-serif' font-weight="300">2000</text>
<text x="508" y="354" font-size="17" fill="#ffffff" font-family='"Liberation Sans","Noto Sans CJK SC",sans-serif' font-weight="300">1</text>
<text x="516.5" y="347.2" font-size="12.24" fill="#ffffff" font-style="italic" font-family='"Liberation Sans","Noto Sans CJK SC",sans-serif'>#</text>
<text x="559" y="355" font-size="17" fill="#ffffff" font-family='"Liberation Sans","Noto Sans CJK SC",sans-serif' font-weight="300">2</text>
<text x="567.5" y="348.2" font-size="12.24" fill="#ffffff" font-style="italic" font-family='"Liberation Sans","Noto Sans CJK SC",sans-serif'>#</text>
<text x="571" y="353" font-size="9.5" fill="#ffffff" font-family='"Liberation Sans","Noto Sans CJK SC",sans-serif'>(2套)</text>
<text x="487.5" y="368" font-size="9" fill="#ffffff" font-family='"Liberation Sans","Noto Sans CJK SC",sans-serif' letter-spacing="0.9" font-weight="300">全自动絮凝剂制备设备</text>
<text x="498.5" y="382" font-size="10" fill="#00ff00" font-family='"Liberation Sans","Noto Sans CJK SC",sans-serif' letter-spacing="0.8" font-weight="300">(设备高</text>
<text x="541" y="383" font-size="12" fill="#ffffff" font-family='"Liberation Sans","Noto Sans CJK SC",sans-serif' font-weight="300">:1500mm)</text>
<rect x="620.4" y="347.4" width="25.6" height="33.6" fill="none" stroke="#ffffff" stroke-width="1.5"/>
<rect x="656" y="347.4" width="25.8" height="33.6" fill="none" stroke="#ffffff" stroke-width="1.5"/>
<text x="625.5" y="375" font-size="17" fill="#ffffff" font-family='"Liberation Sans","Noto Sans CJK SC",sans-serif' font-weight="300">1</text>
<text x="634.0" y="368.2" font-size="12.24" fill="#ffffff" font-style="italic" font-family='"Liberation Sans","Noto Sans CJK SC",sans-serif'>#</text>
<text x="661.5" y="375" font-size="17" fill="#ffffff" font-family='"Liberation Sans","Noto Sans CJK SC",sans-serif' font-weight="300">2</text>
<text x="670.0" y="368.2" font-size="12.24" fill="#ffffff" font-style="italic" font-family='"Liberation Sans","Noto Sans CJK SC",sans-serif'>#</text>
<text x="645.5" y="399" font-size="10" fill="#00ff00" font-family='"Liberation Sans","Noto Sans CJK SC",sans-serif' letter-spacing="1" font-weight="300">空压机</text>
<rect x="704" y="328.6" width="35.8" height="16.8" fill="none" stroke="#ffffff" stroke-width="1.5"/>
<text x="715.5" y="342.5" font-size="11" fill="#ffffff" font-family='"Liberation Sans","Noto Sans CJK SC",sans-serif' font-weight="300">1</text>
<text x="721.0" y="338.1" font-size="8" fill="#ffffff" font-style="italic" font-family='"Liberation Sans","Noto Sans CJK SC",sans-serif'>#</text>
<text x="692.3" y="357.5" font-size="10" fill="#00ff00" font-family='"Liberation Sans","Noto Sans CJK SC",sans-serif' letter-spacing="1.2" font-weight="300">进料螺杆泵</text>
<rect x="911.2" y="328.6" width="35.8" height="16.8" fill="none" stroke="#ffffff" stroke-width="1.5"/>
<text x="922.7" y="342.5" font-size="11" fill="#ffffff" font-family='"Liberation Sans","Noto Sans CJK SC",sans-serif' font-weight="300">2</text>
<text x="928.2" y="338.1" font-size="8" fill="#ffffff" font-style="italic" font-family='"Liberation Sans","Noto Sans CJK SC",sans-serif'>#</text>
<text x="900.2" y="357.5" font-size="10" fill="#00ff00" font-family='"Liberation Sans","Noto Sans CJK SC",sans-serif' letter-spacing="1.2" font-weight="300">进料螺杆泵</text>
<rect x="1130" y="328.6" width="35.8" height="16.8" fill="none" stroke="#ffffff" stroke-width="1.5"/>
<text x="1141.5" y="342.5" font-size="11" fill="#ffffff" font-family='"Liberation Sans","Noto Sans CJK SC",sans-serif' font-weight="300">3</text>
<text x="1147.0" y="338.1" font-size="8" fill="#ffffff" font-style="italic" font-family='"Liberation Sans","Noto Sans CJK SC",sans-serif'>#</text>
<text x="1122.7" y="357.5" font-size="10" fill="#00ff00" font-family='"Liberation Sans","Noto Sans CJK SC",sans-serif' letter-spacing="1.2" font-weight="300">进料螺杆泵</text>
<line x1="658.5" y1="627.6" x2="1322.3" y2="627.6" stroke="#ffffff" stroke-width="1.5" />
<line x1="658.5" y1="644.8" x2="1322.3" y2="644.8" stroke="#ffffff" stroke-width="1.5" />
<line x1="658.5" y1="634.6" x2="1347" y2="634.6" stroke="#ff0000" stroke-width="1.5" />
<line x1="721.3" y1="408" x2="721.3" y2="640.5" stroke="#ff0000" stroke-width="1.38" />
<line x1="730.7" y1="411" x2="730.7" y2="428.5" stroke="#ff0000" stroke-width="1.38" />
<polyline points="690.2,499.5 683.5,499.5 683.5,460.5 698.4,460.5 698.4,429.3 713.6,417.1 724.2,417.1" fill="none" stroke="#ffffff" stroke-width="1.5" />
<polyline points="736.7,421.5 744.3,429.3 744.3,460.5 760.8,460.5 760.8,499.5 753.9,499.5" fill="none" stroke="#ffffff" stroke-width="1.5" />
<rect x="724.2" y="419.3" width="12.5" height="2.9" fill="none" stroke="#ffffff" stroke-width="1.38"/>
<polyline points="729.2,422.2 729.2,427.5" fill="none" stroke="#ffffff" stroke-width="1.25" />
<polyline points="734.4,422.2 734.4,428.4" fill="none" stroke="#ffffff" stroke-width="1.25" />
<polyline points="690.2,631.5 690.2,469.6 753.9,469.6 753.9,631.5" fill="none" stroke="#ffffff" stroke-width="1.5" />
<rect x="693.4" y="474.3" width="57" height="92.4" fill="none" stroke="#ffffff" stroke-width="1.5"/>
<line x1="693.4" y1="566.7" x2="693.4" y2="597.3" stroke="#ffffff" stroke-width="1.38" />
<line x1="750.4" y1="566.7" x2="750.4" y2="597.3" stroke="#ffffff" stroke-width="1.38" />
<line x1="690.2" y1="571.4" x2="753.9" y2="571.4" stroke="#ffffff" stroke-width="1.38" />
<line x1="690.2" y1="593.1" x2="753.9" y2="593.1" stroke="#ffffff" stroke-width="1.38" />
<line x1="690.2" y1="597.3" x2="753.9" y2="597.3" stroke="#ffffff" stroke-width="1.38" />
<polyline points="690.2,520.3 681.3,520.3 681.3,631.5 762.9,631.5 762.9,520.3 753.9,520.3" fill="none" stroke="#ffffff" stroke-width="1.5" />
<polyline points="690.2,527 687.6,530 687.6,621.6" fill="none" stroke="#ffffff" stroke-width="1.38" />
<polyline points="753.9,527 756.6,530 756.6,621.6" fill="none" stroke="#ffffff" stroke-width="1.38" />
<line x1="681.3" y1="621.6" x2="690.2" y2="621.6" stroke="#ffffff" stroke-width="1.38" />
<line x1="753.9" y1="621.6" x2="762.9" y2="621.6" stroke="#ffffff" stroke-width="1.38" />
<line x1="693.4" y1="597.3" x2="693.4" y2="631.5" stroke="#ffffff" stroke-width="1.25" />
<line x1="750.4" y1="597.3" x2="750.4" y2="631.5" stroke="#ffffff" stroke-width="1.25" />
<line x1="699.2" y1="597.3" x2="699.2" y2="631.5" stroke="#ffffff" stroke-width="1.38" />
<line x1="745.4" y1="597.3" x2="745.4" y2="631.5" stroke="#ffffff" stroke-width="1.38" />
<line x1="690.8" y1="605.8" x2="753.0" y2="605.8" stroke="#ff0000" stroke-width="1.38" />
<line x1="690.8" y1="613.2" x2="753.0" y2="613.2" stroke="#ff0000" stroke-width="1.38" />
<line x1="690.8" y1="620.6" x2="753.0" y2="620.6" stroke="#ff0000" stroke-width="1.38" />
<line x1="690.8" y1="626.9" x2="753.0" y2="626.9" stroke="#ff0000" stroke-width="1.38" />
<rect x="694.6" y="599.5" width="3.4" height="3.2" fill="none" stroke="#ffffff" stroke-width="1.0"/>
<rect x="746.4" y="599.5" width="3.4" height="3.2" fill="none" stroke="#ffffff" stroke-width="1.0"/>
<rect x="694.6" y="607" width="3.4" height="3.2" fill="none" stroke="#ffffff" stroke-width="1.0"/>
<rect x="746.4" y="607" width="3.4" height="3.2" fill="none" stroke="#ffffff" stroke-width="1.0"/>
<rect x="694.6" y="614.5" width="3.4" height="3.2" fill="none" stroke="#ffffff" stroke-width="1.0"/>
<rect x="746.4" y="614.5" width="3.4" height="3.2" fill="none" stroke="#ffffff" stroke-width="1.0"/>
<rect x="694.6" y="622" width="3.4" height="3.2" fill="none" stroke="#ffffff" stroke-width="1.0"/>
<rect x="746.4" y="622" width="3.4" height="3.2" fill="none" stroke="#ffffff" stroke-width="1.0"/>
<rect x="694.6" y="628" width="3.4" height="3.2" fill="none" stroke="#ffffff" stroke-width="1.0"/>
<rect x="746.4" y="628" width="3.4" height="3.2" fill="none" stroke="#ffffff" stroke-width="1.0"/>
<circle cx="721.6" cy="439.2" r="14.8" fill="none" stroke="#ffffff" stroke-width="1.38" />
<circle cx="721.6" cy="439.2" r="13" fill="none" stroke="#ffffff" stroke-width="1.38" />
<line x1="702.3" y1="439.2" x2="741.7" y2="439.2" stroke="#ff0000" stroke-width="1.38" />
<path d="M719.6,441 v-8 a2.8,2.8 0 0 1 5.6,0 v8 l-2.8,2.4z" fill="none" stroke="#ffffff" stroke-width="1.25"/>
<line x1="722.4" y1="432" x2="722.4" y2="442" stroke="#ff0000" stroke-width="2.5" />
<polyline points="711.8000000000001,450.5 710.5000000000001,455 710.3000000000001,459.2" fill="none" stroke="#ffffff" stroke-width="1.25" />
<polyline points="709.2,449 707.9000000000001,455 707.9000000000001,459.2" fill="none" stroke="#ffffff" stroke-width="1.25" />
<line x1="709.1" y1="452" x2="709.1" y2="469" stroke="#ff0000" stroke-width="1.5" />
<rect x="705.3" y="459.2" width="7.6" height="5.6" fill="none" stroke="#ffffff" stroke-width="1.38"/>
<line x1="710.9000000000001" y1="464.8" x2="710.9000000000001" y2="469.6" stroke="#ffffff" stroke-width="1.25" />
<line x1="707.7" y1="464.8" x2="707.7" y2="469.6" stroke="#ffffff" stroke-width="1.25" />
<polyline points="731.4,450.5 732.6999999999999,455 732.9,459.2" fill="none" stroke="#ffffff" stroke-width="1.25" />
<polyline points="734.0,449 735.3,455 735.3,459.2" fill="none" stroke="#ffffff" stroke-width="1.25" />
<line x1="734.1" y1="452" x2="734.1" y2="469" stroke="#ff0000" stroke-width="1.5" />
<rect x="730.3" y="459.2" width="7.6" height="5.6" fill="none" stroke="#ffffff" stroke-width="1.38"/>
<line x1="732.3" y1="464.8" x2="732.3" y2="469.6" stroke="#ffffff" stroke-width="1.25" />
<line x1="735.5" y1="464.8" x2="735.5" y2="469.6" stroke="#ffffff" stroke-width="1.25" />
<path d="M720.6,460 l3,3.6 M723.6,460 l-3,3.6" stroke="#ffffff" stroke-width="1.25"/>
<line x1="720.4" y1="454" x2="720.4" y2="469.6" stroke="#ffffff" stroke-width="1.0" />
<line x1="723.4" y1="454" x2="723.4" y2="469.6" stroke="#ffffff" stroke-width="1.0" />
<line x1="945.0" y1="408" x2="945.0" y2="640.5" stroke="#ff0000" stroke-width="1.38" />
<line x1="954.4" y1="411" x2="954.4" y2="428.5" stroke="#ff0000" stroke-width="1.38" />
<polyline points="913.9,499.5 907.2,499.5 907.2,460.5 922.1,460.5 922.1,429.3 937.3,417.1 947.9,417.1" fill="none" stroke="#ffffff" stroke-width="1.5" />
<polyline points="960.4,421.5 968.0,429.3 968.0,460.5 984.5,460.5 984.5,499.5 977.6,499.5" fill="none" stroke="#ffffff" stroke-width="1.5" />
<rect x="947.9" y="419.3" width="12.5" height="2.9" fill="none" stroke="#ffffff" stroke-width="1.38"/>
<polyline points="952.9,422.2 952.9,427.5" fill="none" stroke="#ffffff" stroke-width="1.25" />
<polyline points="958.1,422.2 958.1,428.4" fill="none" stroke="#ffffff" stroke-width="1.25" />
<polyline points="913.9,631.5 913.9,469.6 977.6,469.6 977.6,631.5" fill="none" stroke="#ffffff" stroke-width="1.5" />
<rect x="917.1" y="474.3" width="57" height="92.4" fill="none" stroke="#ffffff" stroke-width="1.5"/>
<line x1="917.1" y1="566.7" x2="917.1" y2="597.3" stroke="#ffffff" stroke-width="1.38" />
<line x1="974.1" y1="566.7" x2="974.1" y2="597.3" stroke="#ffffff" stroke-width="1.38" />
<line x1="913.9" y1="571.4" x2="977.6" y2="571.4" stroke="#ffffff" stroke-width="1.38" />
<line x1="913.9" y1="593.1" x2="977.6" y2="593.1" stroke="#ffffff" stroke-width="1.38" />
<line x1="913.9" y1="597.3" x2="977.6" y2="597.3" stroke="#ffffff" stroke-width="1.38" />
<polyline points="913.9,520.3 905.0,520.3 905.0,631.5 986.6,631.5 986.6,520.3 977.6,520.3" fill="none" stroke="#ffffff" stroke-width="1.5" />
<polyline points="913.9,527 911.3,530 911.3,621.6" fill="none" stroke="#ffffff" stroke-width="1.38" />
<polyline points="977.6,527 980.3,530 980.3,621.6" fill="none" stroke="#ffffff" stroke-width="1.38" />
<line x1="905.0" y1="621.6" x2="913.9" y2="621.6" stroke="#ffffff" stroke-width="1.38" />
<line x1="977.6" y1="621.6" x2="986.6" y2="621.6" stroke="#ffffff" stroke-width="1.38" />
<line x1="917.1" y1="597.3" x2="917.1" y2="631.5" stroke="#ffffff" stroke-width="1.25" />
<line x1="974.1" y1="597.3" x2="974.1" y2="631.5" stroke="#ffffff" stroke-width="1.25" />
<line x1="922.9" y1="597.3" x2="922.9" y2="631.5" stroke="#ffffff" stroke-width="1.38" />
<line x1="969.1" y1="597.3" x2="969.1" y2="631.5" stroke="#ffffff" stroke-width="1.38" />
<line x1="914.5" y1="605.8" x2="976.7" y2="605.8" stroke="#ff0000" stroke-width="1.38" />
<line x1="914.5" y1="613.2" x2="976.7" y2="613.2" stroke="#ff0000" stroke-width="1.38" />
<line x1="914.5" y1="620.6" x2="976.7" y2="620.6" stroke="#ff0000" stroke-width="1.38" />
<line x1="914.5" y1="626.9" x2="976.7" y2="626.9" stroke="#ff0000" stroke-width="1.38" />
<rect x="918.3" y="599.5" width="3.4" height="3.2" fill="none" stroke="#ffffff" stroke-width="1.0"/>
<rect x="970.1" y="599.5" width="3.4" height="3.2" fill="none" stroke="#ffffff" stroke-width="1.0"/>
<rect x="918.3" y="607" width="3.4" height="3.2" fill="none" stroke="#ffffff" stroke-width="1.0"/>
<rect x="970.1" y="607" width="3.4" height="3.2" fill="none" stroke="#ffffff" stroke-width="1.0"/>
<rect x="918.3" y="614.5" width="3.4" height="3.2" fill="none" stroke="#ffffff" stroke-width="1.0"/>
<rect x="970.1" y="614.5" width="3.4" height="3.2" fill="none" stroke="#ffffff" stroke-width="1.0"/>
<rect x="918.3" y="622" width="3.4" height="3.2" fill="none" stroke="#ffffff" stroke-width="1.0"/>
<rect x="970.1" y="622" width="3.4" height="3.2" fill="none" stroke="#ffffff" stroke-width="1.0"/>
<rect x="918.3" y="628" width="3.4" height="3.2" fill="none" stroke="#ffffff" stroke-width="1.0"/>
<rect x="970.1" y="628" width="3.4" height="3.2" fill="none" stroke="#ffffff" stroke-width="1.0"/>
<circle cx="945.3" cy="439.2" r="14.8" fill="none" stroke="#ffffff" stroke-width="1.38" />
<circle cx="945.3" cy="439.2" r="13" fill="none" stroke="#ffffff" stroke-width="1.38" />
<line x1="926.0" y1="439.2" x2="965.4" y2="439.2" stroke="#ff0000" stroke-width="1.38" />
<path d="M943.3,441 v-8 a2.8,2.8 0 0 1 5.6,0 v8 l-2.8,2.4z" fill="none" stroke="#ffffff" stroke-width="1.25"/>
<line x1="946.1" y1="432" x2="946.1" y2="442" stroke="#ff0000" stroke-width="2.5" />
<polyline points="935.5,450.5 934.2,455 934.0,459.2" fill="none" stroke="#ffffff" stroke-width="1.25" />
<polyline points="932.9,449 931.6,455 931.6,459.2" fill="none" stroke="#ffffff" stroke-width="1.25" />
<line x1="932.8" y1="452" x2="932.8" y2="469" stroke="#ff0000" stroke-width="1.5" />
<rect x="929.0" y="459.2" width="7.6" height="5.6" fill="none" stroke="#ffffff" stroke-width="1.38"/>
<line x1="934.6" y1="464.8" x2="934.6" y2="469.6" stroke="#ffffff" stroke-width="1.25" />
<line x1="931.4" y1="464.8" x2="931.4" y2="469.6" stroke="#ffffff" stroke-width="1.25" />
<polyline points="955.0999999999999,450.5 956.3999999999999,455 956.5999999999999,459.2" fill="none" stroke="#ffffff" stroke-width="1.25" />
<polyline points="957.6999999999999,449 958.9999999999999,455 958.9999999999999,459.2" fill="none" stroke="#ffffff" stroke-width="1.25" />
<line x1="957.8" y1="452" x2="957.8" y2="469" stroke="#ff0000" stroke-width="1.5" />
<rect x="954.0" y="459.2" width="7.6" height="5.6" fill="none" stroke="#ffffff" stroke-width="1.38"/>
<line x1="955.9999999999999" y1="464.8" x2="955.9999999999999" y2="469.6" stroke="#ffffff" stroke-width="1.25" />
<line x1="959.1999999999999" y1="464.8" x2="959.1999999999999" y2="469.6" stroke="#ffffff" stroke-width="1.25" />
<path d="M944.3,460 l3,3.6 M947.3,460 l-3,3.6" stroke="#ffffff" stroke-width="1.25"/>
<line x1="944.1" y1="454" x2="944.1" y2="469.6" stroke="#ffffff" stroke-width="1.0" />
<line x1="947.1" y1="454" x2="947.1" y2="469.6" stroke="#ffffff" stroke-width="1.0" />
<line x1="1148.6" y1="408" x2="1148.6" y2="640.5" stroke="#ff0000" stroke-width="1.38" />
<line x1="1158.0" y1="411" x2="1158.0" y2="428.5" stroke="#ff0000" stroke-width="1.38" />
<polyline points="1117.5,499.5 1110.8,499.5 1110.8,460.5 1125.7,460.5 1125.7,429.3 1140.9,417.1 1151.5,417.1" fill="none" stroke="#ffffff" stroke-width="1.5" />
<polyline points="1164.0,421.5 1171.6,429.3 1171.6,460.5 1188.1,460.5 1188.1,499.5 1181.2,499.5" fill="none" stroke="#ffffff" stroke-width="1.5" />
<rect x="1151.5" y="419.3" width="12.5" height="2.9" fill="none" stroke="#ffffff" stroke-width="1.38"/>
<polyline points="1156.5,422.2 1156.5,427.5" fill="none" stroke="#ffffff" stroke-width="1.25" />
<polyline points="1161.7,422.2 1161.7,428.4" fill="none" stroke="#ffffff" stroke-width="1.25" />
<polyline points="1117.5,631.5 1117.5,469.6 1181.2,469.6 1181.2,631.5" fill="none" stroke="#ffffff" stroke-width="1.5" />
<rect x="1120.7" y="474.3" width="57" height="92.4" fill="none" stroke="#ffffff" stroke-width="1.5"/>
<line x1="1120.7" y1="566.7" x2="1120.7" y2="597.3" stroke="#ffffff" stroke-width="1.38" />
<line x1="1177.7" y1="566.7" x2="1177.7" y2="597.3" stroke="#ffffff" stroke-width="1.38" />
<line x1="1117.5" y1="571.4" x2="1181.2" y2="571.4" stroke="#ffffff" stroke-width="1.38" />
<line x1="1117.5" y1="593.1" x2="1181.2" y2="593.1" stroke="#ffffff" stroke-width="1.38" />
<line x1="1117.5" y1="597.3" x2="1181.2" y2="597.3" stroke="#ffffff" stroke-width="1.38" />
<polyline points="1117.5,520.3 1108.6,520.3 1108.6,631.5 1190.2,631.5 1190.2,520.3 1181.2,520.3" fill="none" stroke="#ffffff" stroke-width="1.5" />
<polyline points="1117.5,527 1114.9,530 1114.9,621.6" fill="none" stroke="#ffffff" stroke-width="1.38" />
<polyline points="1181.2,527 1183.9,530 1183.9,621.6" fill="none" stroke="#ffffff" stroke-width="1.38" />
<line x1="1108.6" y1="621.6" x2="1117.5" y2="621.6" stroke="#ffffff" stroke-width="1.38" />
<line x1="1181.2" y1="621.6" x2="1190.2" y2="621.6" stroke="#ffffff" stroke-width="1.38" />
<line x1="1120.7" y1="597.3" x2="1120.7" y2="631.5" stroke="#ffffff" stroke-width="1.25" />
<line x1="1177.7" y1="597.3" x2="1177.7" y2="631.5" stroke="#ffffff" stroke-width="1.25" />
<line x1="1126.5" y1="597.3" x2="1126.5" y2="631.5" stroke="#ffffff" stroke-width="1.38" />
<line x1="1172.7" y1="597.3" x2="1172.7" y2="631.5" stroke="#ffffff" stroke-width="1.38" />
<line x1="1118.1" y1="605.8" x2="1180.3" y2="605.8" stroke="#ff0000" stroke-width="1.38" />
<line x1="1118.1" y1="613.2" x2="1180.3" y2="613.2" stroke="#ff0000" stroke-width="1.38" />
<line x1="1118.1" y1="620.6" x2="1180.3" y2="620.6" stroke="#ff0000" stroke-width="1.38" />
<line x1="1118.1" y1="626.9" x2="1180.3" y2="626.9" stroke="#ff0000" stroke-width="1.38" />
<rect x="1121.9" y="599.5" width="3.4" height="3.2" fill="none" stroke="#ffffff" stroke-width="1.0"/>
<rect x="1173.7" y="599.5" width="3.4" height="3.2" fill="none" stroke="#ffffff" stroke-width="1.0"/>
<rect x="1121.9" y="607" width="3.4" height="3.2" fill="none" stroke="#ffffff" stroke-width="1.0"/>
<rect x="1173.7" y="607" width="3.4" height="3.2" fill="none" stroke="#ffffff" stroke-width="1.0"/>
<rect x="1121.9" y="614.5" width="3.4" height="3.2" fill="none" stroke="#ffffff" stroke-width="1.0"/>
<rect x="1173.7" y="614.5" width="3.4" height="3.2" fill="none" stroke="#ffffff" stroke-width="1.0"/>
<rect x="1121.9" y="622" width="3.4" height="3.2" fill="none" stroke="#ffffff" stroke-width="1.0"/>
<rect x="1173.7" y="622" width="3.4" height="3.2" fill="none" stroke="#ffffff" stroke-width="1.0"/>
<rect x="1121.9" y="628" width="3.4" height="3.2" fill="none" stroke="#ffffff" stroke-width="1.0"/>
<rect x="1173.7" y="628" width="3.4" height="3.2" fill="none" stroke="#ffffff" stroke-width="1.0"/>
<circle cx="1148.9" cy="439.2" r="14.8" fill="none" stroke="#ffffff" stroke-width="1.38" />
<circle cx="1148.9" cy="439.2" r="13" fill="none" stroke="#ffffff" stroke-width="1.38" />
<line x1="1129.6" y1="439.2" x2="1169.0" y2="439.2" stroke="#ff0000" stroke-width="1.38" />
<path d="M1146.9,441 v-8 a2.8,2.8 0 0 1 5.6,0 v8 l-2.8,2.4z" fill="none" stroke="#ffffff" stroke-width="1.25"/>
<line x1="1149.7" y1="432" x2="1149.7" y2="442" stroke="#ff0000" stroke-width="2.5" />
<polyline points="1139.1000000000001,450.5 1137.8000000000002,455 1137.6000000000001,459.2" fill="none" stroke="#ffffff" stroke-width="1.25" />
<polyline points="1136.5000000000002,449 1135.2,455 1135.2,459.2" fill="none" stroke="#ffffff" stroke-width="1.25" />
<line x1="1136.4" y1="452" x2="1136.4" y2="469" stroke="#ff0000" stroke-width="1.5" />
<rect x="1132.6" y="459.2" width="7.6" height="5.6" fill="none" stroke="#ffffff" stroke-width="1.38"/>
<line x1="1138.2" y1="464.8" x2="1138.2" y2="469.6" stroke="#ffffff" stroke-width="1.25" />
<line x1="1135.0000000000002" y1="464.8" x2="1135.0000000000002" y2="469.6" stroke="#ffffff" stroke-width="1.25" />
<polyline points="1158.7,450.5 1160.0,455 1160.2,459.2" fill="none" stroke="#ffffff" stroke-width="1.25" />
<polyline points="1161.3,449 1162.6000000000001,455 1162.6000000000001,459.2" fill="none" stroke="#ffffff" stroke-width="1.25" />
<line x1="1161.4" y1="452" x2="1161.4" y2="469" stroke="#ff0000" stroke-width="1.5" />
<rect x="1157.6" y="459.2" width="7.6" height="5.6" fill="none" stroke="#ffffff" stroke-width="1.38"/>
<line x1="1159.6000000000001" y1="464.8" x2="1159.6000000000001" y2="469.6" stroke="#ffffff" stroke-width="1.25" />
<line x1="1162.8" y1="464.8" x2="1162.8" y2="469.6" stroke="#ffffff" stroke-width="1.25" />
<path d="M1147.9,460 l3,3.6 M1150.9,460 l-3,3.6" stroke="#ffffff" stroke-width="1.25"/>
<line x1="1147.7" y1="454" x2="1147.7" y2="469.6" stroke="#ffffff" stroke-width="1.0" />
<line x1="1150.7" y1="454" x2="1150.7" y2="469.6" stroke="#ffffff" stroke-width="1.0" />
<text x="704" y="533" font-size="16" fill="#ffffff" font-family='"Liberation Sans","Noto Sans CJK SC",sans-serif' font-weight="300">1</text>
<text x="712.0" y="526.6" font-size="11.52" fill="#ffffff" font-style="italic" font-family='"Liberation Sans","Noto Sans CJK SC",sans-serif'>#</text>
<text x="926" y="533" font-size="16" fill="#ffffff" font-family='"Liberation Sans","Noto Sans CJK SC",sans-serif' font-weight="300">2</text>
<text x="934.0" y="526.6" font-size="11.52" fill="#ffffff" font-style="italic" font-family='"Liberation Sans","Noto Sans CJK SC",sans-serif'>#</text>
<text x="1128" y="533" font-size="16" fill="#ffffff" font-family='"Liberation Sans","Noto Sans CJK SC",sans-serif' font-weight="300">3</text>
<text x="1136.0" y="526.6" font-size="11.52" fill="#ffffff" font-style="italic" font-family='"Liberation Sans","Noto Sans CJK SC",sans-serif'>#</text>
<line x1="624.7" y1="553" x2="624.7" y2="618" stroke="#ff0000" stroke-width="1.38" />
<path d="M616.2,589.4 v-22.5 a3.5,3.5 0 0 1 3.5,-3.5 h10.6 a3.5,3.5 0 0 1 3.5,3.5 v22.5z" fill="none" stroke="#ffffff" stroke-width="1.5"/>
<line x1="619.3" y1="567" x2="619.3" y2="586" stroke="#ffffff" stroke-width="1.12" />
<line x1="622" y1="567" x2="622" y2="586" stroke="#ffffff" stroke-width="1.12" />
<line x1="627.4" y1="567" x2="627.4" y2="586" stroke="#ffffff" stroke-width="1.12" />
<line x1="630.6" y1="567" x2="630.6" y2="586" stroke="#ffffff" stroke-width="1.12" />
<line x1="616.2" y1="567" x2="633.8" y2="567" stroke="#ffffff" stroke-width="1.12" />
<line x1="616.2" y1="586" x2="633.8" y2="586" stroke="#ffffff" stroke-width="1.12" />
<rect x="621.5" y="589.4" width="7" height="5.2" fill="none" stroke="#ffffff" stroke-width="1.25"/>
<rect x="619.5" y="594.6" width="38.2" height="14.3" fill="none" stroke="#ffffff" stroke-width="1.5"/>
<line x1="650.6" y1="600" x2="650.6" y2="660" stroke="#ff0000" stroke-width="1.38" />
<rect x="647.8" y="608.9" width="5.6" height="4.4" fill="none" stroke="#ffffff" stroke-width="1.25"/>
<rect x="645.5" y="613.3" width="10.4" height="4.7" fill="none" stroke="#ffffff" stroke-width="1.25"/>
<rect x="647.8" y="618" width="5.6" height="5.2" fill="none" stroke="#ffffff" stroke-width="1.25"/>
<rect x="642.4" y="623.2" width="16.1" height="22.1" fill="none" stroke="#ffffff" stroke-width="1.5"/>
<rect x="647.8" y="645.3" width="5.6" height="6.5" fill="none" stroke="#ffffff" stroke-width="1.25"/>
<rect x="644.7" y="651.8" width="12" height="5.7" fill="none" stroke="#ffffff" stroke-width="1.25"/>
<line x1="1329.5" y1="610" x2="1329.5" y2="660" stroke="#ff0000" stroke-width="1.38" />
<rect x="1324.2" y="613.5" width="10.6" height="5" fill="none" stroke="#ffffff" stroke-width="1.25"/>
<rect x="1327" y="618.5" width="5" height="5" fill="none" stroke="#ffffff" stroke-width="1.25"/>
<rect x="1322.3" y="623.5" width="14.5" height="24.5" fill="none" stroke="#ffffff" stroke-width="1.5"/>
<rect x="1327" y="648" width="5" height="4.5" fill="none" stroke="#ffffff" stroke-width="1.25"/>
<rect x="1324.2" y="652.5" width="10.6" height="5" fill="none" stroke="#ffffff" stroke-width="1.25"/>
<polyline points="728.2,549.1 774.7,617.2" fill="none" stroke="#00ff00" stroke-width="1.38" />
<line x1="774.7" y1="617.2" x2="867.7" y2="617.2" stroke="#ffffff" stroke-width="1.38" />
<text x="784" y="564" font-size="9.5" fill="#ffffff" font-family='"Liberation Sans","Noto Sans CJK SC",sans-serif' letter-spacing="1.6" font-weight="300">浓缩脱水</text>
<text x="784" y="578.5" font-size="9.5" fill="#ffffff" font-family='"Liberation Sans","Noto Sans CJK SC",sans-serif' letter-spacing="1.6" font-weight="300">一体化带式</text>
<text x="786" y="592.5" font-size="9.5" fill="#ffffff" font-family='"Liberation Sans","Noto Sans CJK SC",sans-serif' letter-spacing="1.4" font-weight="300">压滤机</text>
<text x="782" y="610" font-size="10.5" fill="#ffffff" font-weight="bold">产量</text>
<text x="806.5" y="610" font-size="11.5" fill="#ffffff" font-family='"Liberation Sans","Noto Sans CJK SC",sans-serif' textLength="71" font-weight="300">:40-80m /h</text>
<text x="851.5" y="602" font-size="7.5" fill="#ffffff" font-family='"Liberation Sans","Noto Sans CJK SC",sans-serif'>3</text>
<rect x="833.4" y="651.6" width="28" height="4" fill="#00ff00"/>
<path d="M859,648 l15,5.6 l-15,5.6z" fill="#00ff00"/>
<text x="1336.5" y="512" font-size="18" fill="#00ff00" font-family='"Liberation Serif","Noto Serif CJK SC",serif' letter-spacing="0.6">污泥堆棚</text>
<rect x="1132.8" y="1075.5" width="480.1" height="131.3" fill="none" stroke="#ffffff" stroke-width="1.5"/>
<line x1="1312.5" y1="1075.5" x2="1312.5" y2="1206.8" stroke="#00ffff" stroke-width="1.5" />
<line x1="1376.3" y1="1075.5" x2="1376.3" y2="1138.6" stroke="#00ffff" stroke-width="1.5" />
<line x1="1184.6" y1="1122.2" x2="1184.6" y2="1206.8" stroke="#00ffff" stroke-width="1.5" />
<line x1="1507.2" y1="1138.6" x2="1507.2" y2="1206.8" stroke="#00ffff" stroke-width="1.5" />
<line x1="1545.5" y1="1138.6" x2="1545.5" y2="1206.8" stroke="#00ffff" stroke-width="1.5" />
<line x1="1312.5" y1="1107.2" x2="1612.9" y2="1107.2" stroke="#00ffff" stroke-width="1.5" />
<line x1="1312.5" y1="1138.6" x2="1612.9" y2="1138.6" stroke="#00ffff" stroke-width="1.5" />
<line x1="1132.8" y1="1122.2" x2="1312.5" y2="1122.2" stroke="#00ffff" stroke-width="1.5" />
<line x1="1132.8" y1="1138.6" x2="1312.5" y2="1138.6" stroke="#00ffff" stroke-width="1.5" />
<line x1="1132.8" y1="1154.6" x2="1312.5" y2="1154.6" stroke="#00ffff" stroke-width="1.5" />
<line x1="1132.8" y1="1169.2" x2="1312.5" y2="1169.2" stroke="#00ffff" stroke-width="1.5" />
<line x1="1132.8" y1="1185.6" x2="1312.5" y2="1185.6" stroke="#00ffff" stroke-width="1.5" />
<line x1="1507.2" y1="1154.6" x2="1612.9" y2="1154.6" stroke="#00ffff" stroke-width="1.5" />
<line x1="1507.2" y1="1169.2" x2="1612.9" y2="1169.2" stroke="#00ffff" stroke-width="1.5" />
<line x1="1507.2" y1="1185.6" x2="1612.9" y2="1185.6" stroke="#00ffff" stroke-width="1.5" />
<text x="1317" y="1096" font-size="13.5" fill="#ffffff" font-weight="900" font-family='"Liberation Serif","Noto Serif CJK SC",serif'>建设单位</text>
<text x="1317" y="1122.5" font-size="13.5" fill="#ffffff" font-weight="900" font-family='"Liberation Serif","Noto Serif CJK SC",serif'>工程名称</text>
<text x="1143" y="1133.5" font-size="10" fill="#ffffff" font-weight="bold" font-family='"Liberation Serif","Noto Serif CJK SC",serif'>设</text>
<text x="1163.5" y="1133.5" font-size="10" fill="#ffffff" font-weight="bold" font-family='"Liberation Serif","Noto Serif CJK SC",serif'>计</text>
<text x="1143" y="1150" font-size="10" fill="#ffffff" font-weight="bold" font-family='"Liberation Serif","Noto Serif CJK SC",serif'>校</text>
<text x="1163.5" y="1150" font-size="10" fill="#ffffff" font-weight="bold" font-family='"Liberation Serif","Noto Serif CJK SC",serif'>核</text>
<text x="1143" y="1166" font-size="10" fill="#ffffff" font-weight="bold" font-family='"Liberation Serif","Noto Serif CJK SC",serif'>审</text>
<text x="1163.5" y="1166" font-size="10" fill="#ffffff" font-weight="bold" font-family='"Liberation Serif","Noto Serif CJK SC",serif'>核</text>
<text x="1143" y="1199.5" font-size="10" fill="#ffffff" font-weight="bold" font-family='"Liberation Serif","Noto Serif CJK SC",serif'>审</text>
<text x="1163.5" y="1199.5" font-size="10" fill="#ffffff" font-weight="bold" font-family='"Liberation Serif","Noto Serif CJK SC",serif'>定</text>
<text x="1136" y="1181.5" font-size="9" fill="#ffffff" font-weight="bold" font-family='"Liberation Serif","Noto Serif CJK SC",serif' textLength="44.5">工程负责人</text>
<text x="1315" y="1175.5" font-size="16" fill="#00ff00" font-family='"Liberation Sans","Noto Sans CJK SC",sans-serif' letter-spacing="1.2" font-weight="300">污泥脱水间平剖面图</text>
<text x="1512" y="1150.5" font-size="10" fill="#ffffff" font-weight="bold" font-family='"Liberation Serif","Noto Serif CJK SC",serif'>图</text>
<text x="1532.5" y="1150.5" font-size="10" fill="#ffffff" font-weight="bold" font-family='"Liberation Serif","Noto Serif CJK SC",serif'>别</text>
<text x="1512" y="1166.5" font-size="10" fill="#1f9a3a" font-family='"Liberation Serif","Noto Serif CJK SC",serif'>比</text>
<text x="1532.5" y="1166.5" font-size="10" fill="#1f9a3a" font-family='"Liberation Serif","Noto Serif CJK SC",serif'>例</text>
<text x="1512" y="1182.5" font-size="10" fill="#ffffff" font-weight="bold" font-family='"Liberation Serif","Noto Serif CJK SC",serif'>图</text>
<text x="1532.5" y="1182.5" font-size="10" fill="#ffffff" font-weight="bold" font-family='"Liberation Serif","Noto Serif CJK SC",serif'>号</text>
<text x="1512" y="1199.5" font-size="10" fill="#ffffff" font-weight="bold" font-family='"Liberation Serif","Noto Serif CJK SC",serif'>日</text>
<text x="1532.5" y="1199.5" font-size="10" fill="#ffffff" font-weight="bold" font-family='"Liberation Serif","Noto Serif CJK SC",serif'>期</text>
<text x="1554.5" y="1168" font-size="12.5" fill="#00ff00" font-family='"Liberation Sans","Noto Sans CJK SC",sans-serif' textLength="33">1:150</text>
<text x="1555.5" y="1184" font-size="11.5" fill="#00ff00" font-family='"Liberation Sans","Noto Sans CJK SC",sans-serif'>Y–8</text>
<line x1="60" y1="1160" x2="60" y2="1208.5" stroke="#ffffff" stroke-width="1.38" />
<line x1="60" y1="1208.5" x2="108" y2="1208.5" stroke="#ffffff" stroke-width="1.38" />
<rect x="55.5" y="1204" width="9" height="9" fill="none" stroke="#ffffff" stroke-width="1.38"/>
<path d="M60.5,1141 l6.5,7 l6.5,-7 M67,1148 v8" stroke="#ffffff" stroke-width="1.38" fill="none"/>
<path d="M114,1194 l13,13 M127,1194 l-13,13" stroke="#ffffff" stroke-width="1.38" fill="none"/>
<circle cx="1611.5" cy="214.5" r="52.3" fill="none" stroke="#4b5059" stroke-width="15.7" />
<rect x="1587" y="189.7" width="50.3" height="51.3" fill="#9b9da7"/>
<rect x="1596" y="199.6" width="31.7" height="31.4" fill="#a9abb5"/>
<text x="1611.5" y="225" font-size="26" fill="#8d8f9a" text-anchor="middle" font-family='"Liberation Serif","Noto Serif CJK SC",serif'>上</text>
<text x="1611.5" y="168" font-size="19" fill="#a4a7ad" text-anchor="middle" font-family='"Liberation Serif","Noto Serif CJK SC",serif'>北</text>
<text x="1611.5" y="282.5" font-size="19" fill="#a4a7ad" text-anchor="middle" font-family='"Liberation Serif","Noto Serif CJK SC",serif'>南</text>
<text x="1555.5" y="224" font-size="19" fill="#a4a7ad" text-anchor="middle" font-family='"Liberation Serif","Noto Serif CJK SC",serif'>西</text>
<text x="1668" y="224" font-size="19" fill="#a4a7ad" text-anchor="middle" font-family='"Liberation Serif","Noto Serif CJK SC",serif'>东</text>
<rect x="1588" y="303.3" width="48" height="17.4" fill="#8b8e9b" rx="4"/>
<text x="1592" y="316" font-size="10.5" fill="#5f636f">WCS</text>
<path d="M1623,310 h8 l-4,3.5z" fill="#a4a7b2"/>
<line x1="1540" y1="162.4" x2="1612.9" y2="162.4" stroke="#ffffff" stroke-width="1.5" />
<line x1="1612.9" y1="162.4" x2="1612.9" y2="1206.8" stroke="#ffffff" stroke-width="1.5" />
<line x1="1639" y1="136.7" x2="1639" y2="1231.3" stroke="#00e6e6" stroke-width="1.62" />
<line x1="1640.6" y1="133" x2="1640.6" y2="1228.6" stroke="#ffffff" stroke-width="1.38" />
</g>
<g id="bottom">
<rect x="8.0" y="1245" width="1.3" height="1.3" fill="#d8dce2"/>
<rect x="8.0" y="1247.5" width="1.3" height="1.3" fill="#d8dce2"/>
<rect x="10.3" y="1245" width="1.3" height="1.3" fill="#d8dce2"/>
<rect x="10.3" y="1247.5" width="1.3" height="1.3" fill="#d8dce2"/>
<rect x="12.6" y="1245" width="1.3" height="1.3" fill="#d8dce2"/>
<rect x="12.6" y="1247.5" width="1.3" height="1.3" fill="#d8dce2"/>
<rect x="14.899999999999999" y="1245" width="1.3" height="1.3" fill="#d8dce2"/>
<rect x="14.899999999999999" y="1247.5" width="1.3" height="1.3" fill="#d8dce2"/>
<rect x="17.2" y="1245" width="1.3" height="1.3" fill="#d8dce2"/>
<rect x="17.2" y="1247.5" width="1.3" height="1.3" fill="#d8dce2"/>
<rect x="19.5" y="1245" width="1.3" height="1.3" fill="#d8dce2"/>
<rect x="19.5" y="1247.5" width="1.3" height="1.3" fill="#d8dce2"/>
<path d="M10.9,1255.9 L18.1,1263.1 M18.1,1255.9 L10.9,1263.1" stroke="#e2e2e2" stroke-width="1.8" fill="none"/>
<path d="M9.5,1289 l7.5,-7.5" stroke="#e2e2e2" stroke-width="2.4" stroke-linecap="round"/>
<path d="M15,1281 a3.6,3.6 0 0 1 4.6,-4.6 l-2.4,2.4 l2,2 l2.4,-2.4 a3.6,3.6 0 0 1 -4.6,4.6z" fill="#e2e2e2"/>
<text x="32" y="1260.2" font-size="16" fill="#111" font-family='"Liberation Mono","Noto Sans CJK SC",monospace' textLength="741" lengthAdjust="spacing">[全部(A)/中心(C)/动态(D)/范围(E)/上一个(P)/比例(S)/窗口(W)/对象(O)] &lt;实时&gt;: _e</text>
<rect x="33.5" y="1275.5" width="14" height="10" fill="#ffffff" stroke="#5a5a5a" stroke-width="1.2"/>
<rect x="33.5" y="1275.5" width="14" height="2.4" fill="#5a5a5a"/>
<path d="M36,1280 l2,1.5 l-2,1.5 M39.5,1283.5 h3.5" stroke="#5a5a5a" stroke-width="1" fill="none"/>
<path d="M51.3,1279.5 h6.4 l-3.2,3.2z" fill="#5a5a5a"/>
<text x="68" y="1286.5" font-size="16.5" fill="#8a8a8a" font-family='"Liberation Mono","Noto Sans CJK SC",monospace' transform="translate(68 1286.5) skewX(-12) translate(-68 -1286.5)">键入命令</text>
<path d="M13,1294 h40 l-6,18 h-28z" fill="#3b4453"/>
<text x="27" y="1308" font-size="12" fill="#ffffff" font-weight="bold">模型</text>
<path d="M62,1294 h52 l-6,18 h-40z" fill="#2e3642"/>
<text x="74" y="1308" font-size="12" fill="#c4cad4">布局1</text>
<path d="M120,1294 h24 l-4,15 h-16z" fill="#2a313c"/>
<path d="M127.5,1303 h7 M131,1299.5 v7" stroke="#aeb6c2" stroke-width="1.6"/>
<rect x="1124" y="1296" width="505" height="23" fill="#2b323d"/>
<text x="1127" y="1312.5" font-size="12" fill="#e4e4e4">模型</text>
<line x1="1154.5" y1="1296" x2="1154.5" y2="1319" stroke="#222933" stroke-width="1" />
<path d="M1163.5,1302 v13 M1170.5,1302 v13 M1161,1305 h13 M1161,1311.5 h13" stroke="#e2e2e2" stroke-width="1.1"/>
<rect x="1187.0" y="1303.0" width="1.6" height="1.6" fill="#e2e2e2"/>
<rect x="1187.0" y="1307.3" width="1.6" height="1.6" fill="#e2e2e2"/>
<rect x="1187.0" y="1311.6" width="1.6" height="1.6" fill="#e2e2e2"/>
<rect x="1191.3" y="1303.0" width="1.6" height="1.6" fill="#e2e2e2"/>
<rect x="1191.3" y="1307.3" width="1.6" height="1.6" fill="#e2e2e2"/>
<rect x="1191.3" y="1311.6" width="1.6" height="1.6" fill="#e2e2e2"/>
<rect x="1195.6" y="1303.0" width="1.6" height="1.6" fill="#e2e2e2"/>
<rect x="1195.6" y="1307.3" width="1.6" height="1.6" fill="#e2e2e2"/>
<rect x="1195.6" y="1311.6" width="1.6" height="1.6" fill="#e2e2e2"/>
<path d="M1209.5,1307.0 h6 l-3,3z" fill="#d0d0d0"/>
<line x1="1223.5" y1="1296" x2="1223.5" y2="1319" stroke="#222933" stroke-width="1" />
<path d="M1229,1302 v13 h13 M1229,1310 h6 v5" stroke="#e2e2e2" stroke-width="1.1" fill="none"/>
<circle cx="1258.5" cy="1309" r="5.5" fill="none" stroke="#e2e2e2" stroke-width="1.1" />
<path d="M1258.5,1309 h7 M1258.5,1309 l5,-7" stroke="#e2e2e2" stroke-width="1.1"/>
<path d="M1276,1307.0 h6 l-3,3z" fill="#d0d0d0"/>
<path d="M1294,1301 l9,14" stroke="#e06060" stroke-width="1.1"/>
<path d="M1298.5,1303 v12 M1292,1310 h7" stroke="#8fd08f" stroke-width="1.1"/>
<path d="M1316.5,1307.0 h6 l-3,3z" fill="#d0d0d0"/>
<path d="M1333,1314 h14 M1333,1314 l11,-10" stroke="#e2e2e2" stroke-width="1.1"/>
<rect x="1354" y="1297.5" width="20" height="21" fill="#4c7fb5"/>
<rect x="1358.5" y="1304" width="11" height="10" fill="none" stroke="#ffffff" stroke-width="1.3"/>
<rect x="1356.5" y="1302" width="4" height="4" fill="#4c7fb5" stroke="#ffffff" stroke-width="1.1"/>
<path d="M1381.5,1307.0 h6 l-3,3z" fill="#d0d0d0"/>
<path d="M1398,1303 h14 M1398,1306.5 h9 M1398,1310 h14 M1398,1313.5 h9" stroke="#e2e2e2" stroke-width="1.4"/>
<rect x="1422" y="1297.5" width="21" height="21" fill="#4c7fb5"/>
<path d="M1431,1301 l5.5,14 l-5.5,-4.5 l-5.5,4.5z" fill="#ffffff"/>
<circle cx="1438" cy="1304" r="2" fill="none" stroke="#fff" stroke-width="1" />
<path d="M1455,1301 l5.5,14 l-5.5,-4.5 l-5.5,4.5z" fill="#e2e2e2"/>
<path d="M1459,1302 l4,-1 l-1,4" stroke="#e2e2e2" stroke-width="1" fill="none"/>
<path d="M1480.5,1301 l5.5,14 l-5.5,-4.5 l-5.5,4.5z" fill="#e2e2e2"/>
<text x="1497" y="1312" font-size="11" fill="#e4e4e4" letter-spacing="-0.6">1:1</text>
<path d="M1516,1307.0 h6 l-3,3z" fill="#d0d0d0"/>
<line x1="1529.5" y1="1296" x2="1529.5" y2="1319" stroke="#222933" stroke-width="1" />
<circle cx="1542" cy="1308" r="4" fill="none" stroke="#e2e2e2" stroke-width="3.2" />
<circle cx="1542" cy="1308" r="7" fill="none" stroke="#e2e2e2" stroke-width="2.4" stroke-dasharray="2.6 2.9"/>
<path d="M1558.5,1307.0 h6 l-3,3z" fill="#d0d0d0"/>
<line x1="1570.5" y1="1296" x2="1570.5" y2="1319" stroke="#222933" stroke-width="1" />
<path d="M1575.5,1308 h14 M1582.5,1301 v14" stroke="#f0f0f0" stroke-width="1.6"/>
<line x1="1594.5" y1="1296" x2="1594.5" y2="1319" stroke="#222933" stroke-width="1" />
<rect x="1602.5" y="1301.5" width="5" height="5" fill="none" stroke="#e2e2e2" stroke-width="1.1"/>
<circle cx="1614" cy="1307" r="2.8" fill="none" stroke="#e2e2e2" stroke-width="1.1" />
<path d="M1606,1309 l3.5,6 h-7z" stroke="#e2e2e2" stroke-width="1.1" fill="none"/>
<line x1="1623.5" y1="1296" x2="1623.5" y2="1319" stroke="#222933" stroke-width="1" />
<rect x="1623" y="1296" width="26" height="23" fill="#2b323d"/>
<rect x="1629" y="1303" width="9" height="8" fill="#4c8fd0"/>
<path d="M1634,1315 l4,-7 l4,7z" fill="#f2c14e"/>
<path d="M1629,1311 v4 h6" stroke="#e2e2e2" stroke-width="1" fill="none"/>
<rect x="1653.5" y="1302.5" width="14" height="11" fill="#7d848e"/>
<path d="M1654,1311 l4,-6 l3,4 l3,-5 l3,6" stroke="#d8d8d8" stroke-width="1" fill="none"/>
<path d="M1660,1315 l4,-7 l4,7z" fill="#f0a890"/>
<rect x="1675" y="1296" width="27" height="23" fill="#2b323d"/>
<rect x="1681.5" y="1303" width="13" height="10" fill="none" stroke="#e2e2e2" stroke-width="1.2"/>
<path d="M1684,1310.5 l3,-3 M1689,1307.5 l3,-3 M1684,1308 v2.5 h2.5 M1689.5,1304.5 h2.5 v2.5" stroke="#e2e2e2" stroke-width="1" fill="none"/>
<path d="M1706,1303 h15 M1706,1308 h15 M1706,1313 h15" stroke="#f0f0f0" stroke-width="1.7"/>
</g>
</svg>
</body></html>
